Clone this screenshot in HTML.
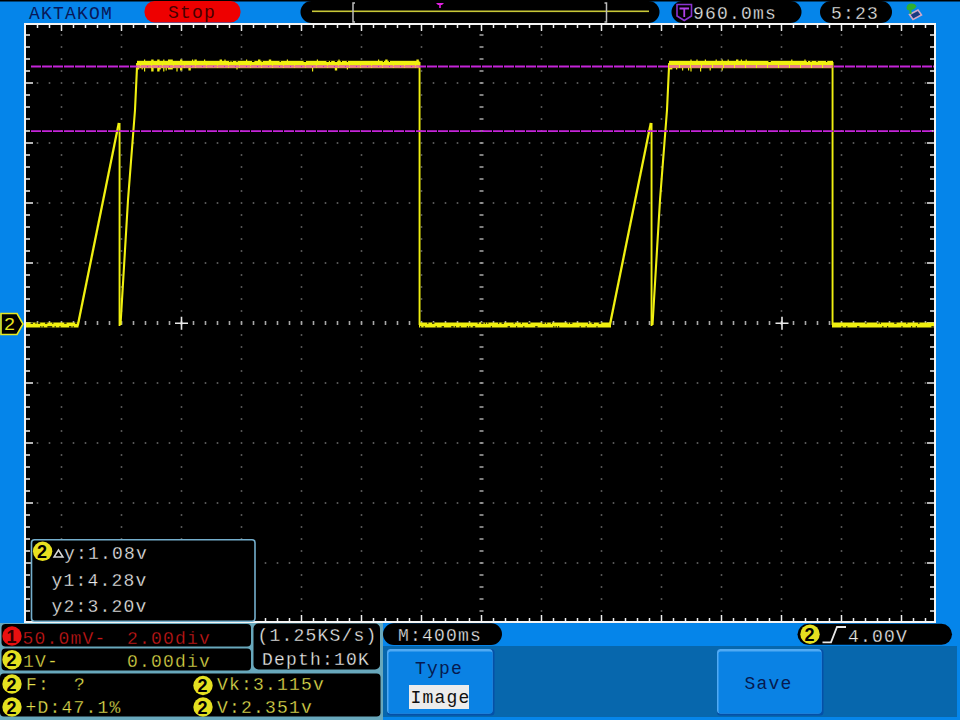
<!DOCTYPE html>
<html><head><meta charset="utf-8"><style>
html,body{margin:0;padding:0;background:#0585ea;overflow:hidden}
svg{display:block}
</style></head><body>
<svg width="960" height="720" viewBox="0 0 960 720">
<rect x="0" y="0" width="960" height="720" fill="#0585ea"/>
<rect x="0" y="0" width="960" height="1.5" fill="#000"/>
<rect x="24" y="23" width="912" height="600" fill="#000"/>
<path d="M60.7 34.2h1.6v1.6h-1.6zM60.7 46.2h1.6v1.6h-1.6zM60.7 58.2h1.6v1.6h-1.6zM60.7 70.2h1.6v1.6h-1.6zM60.7 82.2h1.6v1.6h-1.6zM60.7 94.2h1.6v1.6h-1.6zM60.7 106.2h1.6v1.6h-1.6zM60.7 118.2h1.6v1.6h-1.6zM60.7 130.2h1.6v1.6h-1.6zM60.7 142.2h1.6v1.6h-1.6zM60.7 154.2h1.6v1.6h-1.6zM60.7 166.2h1.6v1.6h-1.6zM60.7 178.2h1.6v1.6h-1.6zM60.7 190.2h1.6v1.6h-1.6zM60.7 202.2h1.6v1.6h-1.6zM60.7 214.2h1.6v1.6h-1.6zM60.7 226.2h1.6v1.6h-1.6zM60.7 238.2h1.6v1.6h-1.6zM60.7 250.2h1.6v1.6h-1.6zM60.7 262.2h1.6v1.6h-1.6zM60.7 274.2h1.6v1.6h-1.6zM60.7 286.2h1.6v1.6h-1.6zM60.7 298.2h1.6v1.6h-1.6zM60.7 310.2h1.6v1.6h-1.6zM60.7 322.2h1.6v1.6h-1.6zM60.7 334.2h1.6v1.6h-1.6zM60.7 346.2h1.6v1.6h-1.6zM60.7 358.2h1.6v1.6h-1.6zM60.7 370.2h1.6v1.6h-1.6zM60.7 382.2h1.6v1.6h-1.6zM60.7 394.2h1.6v1.6h-1.6zM60.7 406.2h1.6v1.6h-1.6zM60.7 418.2h1.6v1.6h-1.6zM60.7 430.2h1.6v1.6h-1.6zM60.7 442.2h1.6v1.6h-1.6zM60.7 454.2h1.6v1.6h-1.6zM60.7 466.2h1.6v1.6h-1.6zM60.7 478.2h1.6v1.6h-1.6zM60.7 490.2h1.6v1.6h-1.6zM60.7 502.2h1.6v1.6h-1.6zM60.7 514.2h1.6v1.6h-1.6zM60.7 526.2h1.6v1.6h-1.6zM60.7 538.2h1.6v1.6h-1.6zM60.7 550.2h1.6v1.6h-1.6zM60.7 562.2h1.6v1.6h-1.6zM60.7 574.2h1.6v1.6h-1.6zM60.7 586.2h1.6v1.6h-1.6zM60.7 598.2h1.6v1.6h-1.6zM60.7 610.2h1.6v1.6h-1.6zM120.7 34.2h1.6v1.6h-1.6zM120.7 46.2h1.6v1.6h-1.6zM120.7 58.2h1.6v1.6h-1.6zM120.7 70.2h1.6v1.6h-1.6zM120.7 82.2h1.6v1.6h-1.6zM120.7 94.2h1.6v1.6h-1.6zM120.7 106.2h1.6v1.6h-1.6zM120.7 118.2h1.6v1.6h-1.6zM120.7 130.2h1.6v1.6h-1.6zM120.7 142.2h1.6v1.6h-1.6zM120.7 154.2h1.6v1.6h-1.6zM120.7 166.2h1.6v1.6h-1.6zM120.7 178.2h1.6v1.6h-1.6zM120.7 190.2h1.6v1.6h-1.6zM120.7 202.2h1.6v1.6h-1.6zM120.7 214.2h1.6v1.6h-1.6zM120.7 226.2h1.6v1.6h-1.6zM120.7 238.2h1.6v1.6h-1.6zM120.7 250.2h1.6v1.6h-1.6zM120.7 262.2h1.6v1.6h-1.6zM120.7 274.2h1.6v1.6h-1.6zM120.7 286.2h1.6v1.6h-1.6zM120.7 298.2h1.6v1.6h-1.6zM120.7 310.2h1.6v1.6h-1.6zM120.7 322.2h1.6v1.6h-1.6zM120.7 334.2h1.6v1.6h-1.6zM120.7 346.2h1.6v1.6h-1.6zM120.7 358.2h1.6v1.6h-1.6zM120.7 370.2h1.6v1.6h-1.6zM120.7 382.2h1.6v1.6h-1.6zM120.7 394.2h1.6v1.6h-1.6zM120.7 406.2h1.6v1.6h-1.6zM120.7 418.2h1.6v1.6h-1.6zM120.7 430.2h1.6v1.6h-1.6zM120.7 442.2h1.6v1.6h-1.6zM120.7 454.2h1.6v1.6h-1.6zM120.7 466.2h1.6v1.6h-1.6zM120.7 478.2h1.6v1.6h-1.6zM120.7 490.2h1.6v1.6h-1.6zM120.7 502.2h1.6v1.6h-1.6zM120.7 514.2h1.6v1.6h-1.6zM120.7 526.2h1.6v1.6h-1.6zM120.7 538.2h1.6v1.6h-1.6zM120.7 550.2h1.6v1.6h-1.6zM120.7 562.2h1.6v1.6h-1.6zM120.7 574.2h1.6v1.6h-1.6zM120.7 586.2h1.6v1.6h-1.6zM120.7 598.2h1.6v1.6h-1.6zM120.7 610.2h1.6v1.6h-1.6zM180.7 34.2h1.6v1.6h-1.6zM180.7 46.2h1.6v1.6h-1.6zM180.7 58.2h1.6v1.6h-1.6zM180.7 70.2h1.6v1.6h-1.6zM180.7 82.2h1.6v1.6h-1.6zM180.7 94.2h1.6v1.6h-1.6zM180.7 106.2h1.6v1.6h-1.6zM180.7 118.2h1.6v1.6h-1.6zM180.7 130.2h1.6v1.6h-1.6zM180.7 142.2h1.6v1.6h-1.6zM180.7 154.2h1.6v1.6h-1.6zM180.7 166.2h1.6v1.6h-1.6zM180.7 178.2h1.6v1.6h-1.6zM180.7 190.2h1.6v1.6h-1.6zM180.7 202.2h1.6v1.6h-1.6zM180.7 214.2h1.6v1.6h-1.6zM180.7 226.2h1.6v1.6h-1.6zM180.7 238.2h1.6v1.6h-1.6zM180.7 250.2h1.6v1.6h-1.6zM180.7 262.2h1.6v1.6h-1.6zM180.7 274.2h1.6v1.6h-1.6zM180.7 286.2h1.6v1.6h-1.6zM180.7 298.2h1.6v1.6h-1.6zM180.7 310.2h1.6v1.6h-1.6zM180.7 322.2h1.6v1.6h-1.6zM180.7 334.2h1.6v1.6h-1.6zM180.7 346.2h1.6v1.6h-1.6zM180.7 358.2h1.6v1.6h-1.6zM180.7 370.2h1.6v1.6h-1.6zM180.7 382.2h1.6v1.6h-1.6zM180.7 394.2h1.6v1.6h-1.6zM180.7 406.2h1.6v1.6h-1.6zM180.7 418.2h1.6v1.6h-1.6zM180.7 430.2h1.6v1.6h-1.6zM180.7 442.2h1.6v1.6h-1.6zM180.7 454.2h1.6v1.6h-1.6zM180.7 466.2h1.6v1.6h-1.6zM180.7 478.2h1.6v1.6h-1.6zM180.7 490.2h1.6v1.6h-1.6zM180.7 502.2h1.6v1.6h-1.6zM180.7 514.2h1.6v1.6h-1.6zM180.7 526.2h1.6v1.6h-1.6zM180.7 538.2h1.6v1.6h-1.6zM180.7 550.2h1.6v1.6h-1.6zM180.7 562.2h1.6v1.6h-1.6zM180.7 574.2h1.6v1.6h-1.6zM180.7 586.2h1.6v1.6h-1.6zM180.7 598.2h1.6v1.6h-1.6zM180.7 610.2h1.6v1.6h-1.6zM240.7 34.2h1.6v1.6h-1.6zM240.7 46.2h1.6v1.6h-1.6zM240.7 58.2h1.6v1.6h-1.6zM240.7 70.2h1.6v1.6h-1.6zM240.7 82.2h1.6v1.6h-1.6zM240.7 94.2h1.6v1.6h-1.6zM240.7 106.2h1.6v1.6h-1.6zM240.7 118.2h1.6v1.6h-1.6zM240.7 130.2h1.6v1.6h-1.6zM240.7 142.2h1.6v1.6h-1.6zM240.7 154.2h1.6v1.6h-1.6zM240.7 166.2h1.6v1.6h-1.6zM240.7 178.2h1.6v1.6h-1.6zM240.7 190.2h1.6v1.6h-1.6zM240.7 202.2h1.6v1.6h-1.6zM240.7 214.2h1.6v1.6h-1.6zM240.7 226.2h1.6v1.6h-1.6zM240.7 238.2h1.6v1.6h-1.6zM240.7 250.2h1.6v1.6h-1.6zM240.7 262.2h1.6v1.6h-1.6zM240.7 274.2h1.6v1.6h-1.6zM240.7 286.2h1.6v1.6h-1.6zM240.7 298.2h1.6v1.6h-1.6zM240.7 310.2h1.6v1.6h-1.6zM240.7 322.2h1.6v1.6h-1.6zM240.7 334.2h1.6v1.6h-1.6zM240.7 346.2h1.6v1.6h-1.6zM240.7 358.2h1.6v1.6h-1.6zM240.7 370.2h1.6v1.6h-1.6zM240.7 382.2h1.6v1.6h-1.6zM240.7 394.2h1.6v1.6h-1.6zM240.7 406.2h1.6v1.6h-1.6zM240.7 418.2h1.6v1.6h-1.6zM240.7 430.2h1.6v1.6h-1.6zM240.7 442.2h1.6v1.6h-1.6zM240.7 454.2h1.6v1.6h-1.6zM240.7 466.2h1.6v1.6h-1.6zM240.7 478.2h1.6v1.6h-1.6zM240.7 490.2h1.6v1.6h-1.6zM240.7 502.2h1.6v1.6h-1.6zM240.7 514.2h1.6v1.6h-1.6zM240.7 526.2h1.6v1.6h-1.6zM240.7 538.2h1.6v1.6h-1.6zM240.7 550.2h1.6v1.6h-1.6zM240.7 562.2h1.6v1.6h-1.6zM240.7 574.2h1.6v1.6h-1.6zM240.7 586.2h1.6v1.6h-1.6zM240.7 598.2h1.6v1.6h-1.6zM240.7 610.2h1.6v1.6h-1.6zM300.7 34.2h1.6v1.6h-1.6zM300.7 46.2h1.6v1.6h-1.6zM300.7 58.2h1.6v1.6h-1.6zM300.7 70.2h1.6v1.6h-1.6zM300.7 82.2h1.6v1.6h-1.6zM300.7 94.2h1.6v1.6h-1.6zM300.7 106.2h1.6v1.6h-1.6zM300.7 118.2h1.6v1.6h-1.6zM300.7 130.2h1.6v1.6h-1.6zM300.7 142.2h1.6v1.6h-1.6zM300.7 154.2h1.6v1.6h-1.6zM300.7 166.2h1.6v1.6h-1.6zM300.7 178.2h1.6v1.6h-1.6zM300.7 190.2h1.6v1.6h-1.6zM300.7 202.2h1.6v1.6h-1.6zM300.7 214.2h1.6v1.6h-1.6zM300.7 226.2h1.6v1.6h-1.6zM300.7 238.2h1.6v1.6h-1.6zM300.7 250.2h1.6v1.6h-1.6zM300.7 262.2h1.6v1.6h-1.6zM300.7 274.2h1.6v1.6h-1.6zM300.7 286.2h1.6v1.6h-1.6zM300.7 298.2h1.6v1.6h-1.6zM300.7 310.2h1.6v1.6h-1.6zM300.7 322.2h1.6v1.6h-1.6zM300.7 334.2h1.6v1.6h-1.6zM300.7 346.2h1.6v1.6h-1.6zM300.7 358.2h1.6v1.6h-1.6zM300.7 370.2h1.6v1.6h-1.6zM300.7 382.2h1.6v1.6h-1.6zM300.7 394.2h1.6v1.6h-1.6zM300.7 406.2h1.6v1.6h-1.6zM300.7 418.2h1.6v1.6h-1.6zM300.7 430.2h1.6v1.6h-1.6zM300.7 442.2h1.6v1.6h-1.6zM300.7 454.2h1.6v1.6h-1.6zM300.7 466.2h1.6v1.6h-1.6zM300.7 478.2h1.6v1.6h-1.6zM300.7 490.2h1.6v1.6h-1.6zM300.7 502.2h1.6v1.6h-1.6zM300.7 514.2h1.6v1.6h-1.6zM300.7 526.2h1.6v1.6h-1.6zM300.7 538.2h1.6v1.6h-1.6zM300.7 550.2h1.6v1.6h-1.6zM300.7 562.2h1.6v1.6h-1.6zM300.7 574.2h1.6v1.6h-1.6zM300.7 586.2h1.6v1.6h-1.6zM300.7 598.2h1.6v1.6h-1.6zM300.7 610.2h1.6v1.6h-1.6zM360.7 34.2h1.6v1.6h-1.6zM360.7 46.2h1.6v1.6h-1.6zM360.7 58.2h1.6v1.6h-1.6zM360.7 70.2h1.6v1.6h-1.6zM360.7 82.2h1.6v1.6h-1.6zM360.7 94.2h1.6v1.6h-1.6zM360.7 106.2h1.6v1.6h-1.6zM360.7 118.2h1.6v1.6h-1.6zM360.7 130.2h1.6v1.6h-1.6zM360.7 142.2h1.6v1.6h-1.6zM360.7 154.2h1.6v1.6h-1.6zM360.7 166.2h1.6v1.6h-1.6zM360.7 178.2h1.6v1.6h-1.6zM360.7 190.2h1.6v1.6h-1.6zM360.7 202.2h1.6v1.6h-1.6zM360.7 214.2h1.6v1.6h-1.6zM360.7 226.2h1.6v1.6h-1.6zM360.7 238.2h1.6v1.6h-1.6zM360.7 250.2h1.6v1.6h-1.6zM360.7 262.2h1.6v1.6h-1.6zM360.7 274.2h1.6v1.6h-1.6zM360.7 286.2h1.6v1.6h-1.6zM360.7 298.2h1.6v1.6h-1.6zM360.7 310.2h1.6v1.6h-1.6zM360.7 322.2h1.6v1.6h-1.6zM360.7 334.2h1.6v1.6h-1.6zM360.7 346.2h1.6v1.6h-1.6zM360.7 358.2h1.6v1.6h-1.6zM360.7 370.2h1.6v1.6h-1.6zM360.7 382.2h1.6v1.6h-1.6zM360.7 394.2h1.6v1.6h-1.6zM360.7 406.2h1.6v1.6h-1.6zM360.7 418.2h1.6v1.6h-1.6zM360.7 430.2h1.6v1.6h-1.6zM360.7 442.2h1.6v1.6h-1.6zM360.7 454.2h1.6v1.6h-1.6zM360.7 466.2h1.6v1.6h-1.6zM360.7 478.2h1.6v1.6h-1.6zM360.7 490.2h1.6v1.6h-1.6zM360.7 502.2h1.6v1.6h-1.6zM360.7 514.2h1.6v1.6h-1.6zM360.7 526.2h1.6v1.6h-1.6zM360.7 538.2h1.6v1.6h-1.6zM360.7 550.2h1.6v1.6h-1.6zM360.7 562.2h1.6v1.6h-1.6zM360.7 574.2h1.6v1.6h-1.6zM360.7 586.2h1.6v1.6h-1.6zM360.7 598.2h1.6v1.6h-1.6zM360.7 610.2h1.6v1.6h-1.6zM420.7 34.2h1.6v1.6h-1.6zM420.7 46.2h1.6v1.6h-1.6zM420.7 58.2h1.6v1.6h-1.6zM420.7 70.2h1.6v1.6h-1.6zM420.7 82.2h1.6v1.6h-1.6zM420.7 94.2h1.6v1.6h-1.6zM420.7 106.2h1.6v1.6h-1.6zM420.7 118.2h1.6v1.6h-1.6zM420.7 130.2h1.6v1.6h-1.6zM420.7 142.2h1.6v1.6h-1.6zM420.7 154.2h1.6v1.6h-1.6zM420.7 166.2h1.6v1.6h-1.6zM420.7 178.2h1.6v1.6h-1.6zM420.7 190.2h1.6v1.6h-1.6zM420.7 202.2h1.6v1.6h-1.6zM420.7 214.2h1.6v1.6h-1.6zM420.7 226.2h1.6v1.6h-1.6zM420.7 238.2h1.6v1.6h-1.6zM420.7 250.2h1.6v1.6h-1.6zM420.7 262.2h1.6v1.6h-1.6zM420.7 274.2h1.6v1.6h-1.6zM420.7 286.2h1.6v1.6h-1.6zM420.7 298.2h1.6v1.6h-1.6zM420.7 310.2h1.6v1.6h-1.6zM420.7 322.2h1.6v1.6h-1.6zM420.7 334.2h1.6v1.6h-1.6zM420.7 346.2h1.6v1.6h-1.6zM420.7 358.2h1.6v1.6h-1.6zM420.7 370.2h1.6v1.6h-1.6zM420.7 382.2h1.6v1.6h-1.6zM420.7 394.2h1.6v1.6h-1.6zM420.7 406.2h1.6v1.6h-1.6zM420.7 418.2h1.6v1.6h-1.6zM420.7 430.2h1.6v1.6h-1.6zM420.7 442.2h1.6v1.6h-1.6zM420.7 454.2h1.6v1.6h-1.6zM420.7 466.2h1.6v1.6h-1.6zM420.7 478.2h1.6v1.6h-1.6zM420.7 490.2h1.6v1.6h-1.6zM420.7 502.2h1.6v1.6h-1.6zM420.7 514.2h1.6v1.6h-1.6zM420.7 526.2h1.6v1.6h-1.6zM420.7 538.2h1.6v1.6h-1.6zM420.7 550.2h1.6v1.6h-1.6zM420.7 562.2h1.6v1.6h-1.6zM420.7 574.2h1.6v1.6h-1.6zM420.7 586.2h1.6v1.6h-1.6zM420.7 598.2h1.6v1.6h-1.6zM420.7 610.2h1.6v1.6h-1.6zM540.7 34.2h1.6v1.6h-1.6zM540.7 46.2h1.6v1.6h-1.6zM540.7 58.2h1.6v1.6h-1.6zM540.7 70.2h1.6v1.6h-1.6zM540.7 82.2h1.6v1.6h-1.6zM540.7 94.2h1.6v1.6h-1.6zM540.7 106.2h1.6v1.6h-1.6zM540.7 118.2h1.6v1.6h-1.6zM540.7 130.2h1.6v1.6h-1.6zM540.7 142.2h1.6v1.6h-1.6zM540.7 154.2h1.6v1.6h-1.6zM540.7 166.2h1.6v1.6h-1.6zM540.7 178.2h1.6v1.6h-1.6zM540.7 190.2h1.6v1.6h-1.6zM540.7 202.2h1.6v1.6h-1.6zM540.7 214.2h1.6v1.6h-1.6zM540.7 226.2h1.6v1.6h-1.6zM540.7 238.2h1.6v1.6h-1.6zM540.7 250.2h1.6v1.6h-1.6zM540.7 262.2h1.6v1.6h-1.6zM540.7 274.2h1.6v1.6h-1.6zM540.7 286.2h1.6v1.6h-1.6zM540.7 298.2h1.6v1.6h-1.6zM540.7 310.2h1.6v1.6h-1.6zM540.7 322.2h1.6v1.6h-1.6zM540.7 334.2h1.6v1.6h-1.6zM540.7 346.2h1.6v1.6h-1.6zM540.7 358.2h1.6v1.6h-1.6zM540.7 370.2h1.6v1.6h-1.6zM540.7 382.2h1.6v1.6h-1.6zM540.7 394.2h1.6v1.6h-1.6zM540.7 406.2h1.6v1.6h-1.6zM540.7 418.2h1.6v1.6h-1.6zM540.7 430.2h1.6v1.6h-1.6zM540.7 442.2h1.6v1.6h-1.6zM540.7 454.2h1.6v1.6h-1.6zM540.7 466.2h1.6v1.6h-1.6zM540.7 478.2h1.6v1.6h-1.6zM540.7 490.2h1.6v1.6h-1.6zM540.7 502.2h1.6v1.6h-1.6zM540.7 514.2h1.6v1.6h-1.6zM540.7 526.2h1.6v1.6h-1.6zM540.7 538.2h1.6v1.6h-1.6zM540.7 550.2h1.6v1.6h-1.6zM540.7 562.2h1.6v1.6h-1.6zM540.7 574.2h1.6v1.6h-1.6zM540.7 586.2h1.6v1.6h-1.6zM540.7 598.2h1.6v1.6h-1.6zM540.7 610.2h1.6v1.6h-1.6zM600.7 34.2h1.6v1.6h-1.6zM600.7 46.2h1.6v1.6h-1.6zM600.7 58.2h1.6v1.6h-1.6zM600.7 70.2h1.6v1.6h-1.6zM600.7 82.2h1.6v1.6h-1.6zM600.7 94.2h1.6v1.6h-1.6zM600.7 106.2h1.6v1.6h-1.6zM600.7 118.2h1.6v1.6h-1.6zM600.7 130.2h1.6v1.6h-1.6zM600.7 142.2h1.6v1.6h-1.6zM600.7 154.2h1.6v1.6h-1.6zM600.7 166.2h1.6v1.6h-1.6zM600.7 178.2h1.6v1.6h-1.6zM600.7 190.2h1.6v1.6h-1.6zM600.7 202.2h1.6v1.6h-1.6zM600.7 214.2h1.6v1.6h-1.6zM600.7 226.2h1.6v1.6h-1.6zM600.7 238.2h1.6v1.6h-1.6zM600.7 250.2h1.6v1.6h-1.6zM600.7 262.2h1.6v1.6h-1.6zM600.7 274.2h1.6v1.6h-1.6zM600.7 286.2h1.6v1.6h-1.6zM600.7 298.2h1.6v1.6h-1.6zM600.7 310.2h1.6v1.6h-1.6zM600.7 322.2h1.6v1.6h-1.6zM600.7 334.2h1.6v1.6h-1.6zM600.7 346.2h1.6v1.6h-1.6zM600.7 358.2h1.6v1.6h-1.6zM600.7 370.2h1.6v1.6h-1.6zM600.7 382.2h1.6v1.6h-1.6zM600.7 394.2h1.6v1.6h-1.6zM600.7 406.2h1.6v1.6h-1.6zM600.7 418.2h1.6v1.6h-1.6zM600.7 430.2h1.6v1.6h-1.6zM600.7 442.2h1.6v1.6h-1.6zM600.7 454.2h1.6v1.6h-1.6zM600.7 466.2h1.6v1.6h-1.6zM600.7 478.2h1.6v1.6h-1.6zM600.7 490.2h1.6v1.6h-1.6zM600.7 502.2h1.6v1.6h-1.6zM600.7 514.2h1.6v1.6h-1.6zM600.7 526.2h1.6v1.6h-1.6zM600.7 538.2h1.6v1.6h-1.6zM600.7 550.2h1.6v1.6h-1.6zM600.7 562.2h1.6v1.6h-1.6zM600.7 574.2h1.6v1.6h-1.6zM600.7 586.2h1.6v1.6h-1.6zM600.7 598.2h1.6v1.6h-1.6zM600.7 610.2h1.6v1.6h-1.6zM660.7 34.2h1.6v1.6h-1.6zM660.7 46.2h1.6v1.6h-1.6zM660.7 58.2h1.6v1.6h-1.6zM660.7 70.2h1.6v1.6h-1.6zM660.7 82.2h1.6v1.6h-1.6zM660.7 94.2h1.6v1.6h-1.6zM660.7 106.2h1.6v1.6h-1.6zM660.7 118.2h1.6v1.6h-1.6zM660.7 130.2h1.6v1.6h-1.6zM660.7 142.2h1.6v1.6h-1.6zM660.7 154.2h1.6v1.6h-1.6zM660.7 166.2h1.6v1.6h-1.6zM660.7 178.2h1.6v1.6h-1.6zM660.7 190.2h1.6v1.6h-1.6zM660.7 202.2h1.6v1.6h-1.6zM660.7 214.2h1.6v1.6h-1.6zM660.7 226.2h1.6v1.6h-1.6zM660.7 238.2h1.6v1.6h-1.6zM660.7 250.2h1.6v1.6h-1.6zM660.7 262.2h1.6v1.6h-1.6zM660.7 274.2h1.6v1.6h-1.6zM660.7 286.2h1.6v1.6h-1.6zM660.7 298.2h1.6v1.6h-1.6zM660.7 310.2h1.6v1.6h-1.6zM660.7 322.2h1.6v1.6h-1.6zM660.7 334.2h1.6v1.6h-1.6zM660.7 346.2h1.6v1.6h-1.6zM660.7 358.2h1.6v1.6h-1.6zM660.7 370.2h1.6v1.6h-1.6zM660.7 382.2h1.6v1.6h-1.6zM660.7 394.2h1.6v1.6h-1.6zM660.7 406.2h1.6v1.6h-1.6zM660.7 418.2h1.6v1.6h-1.6zM660.7 430.2h1.6v1.6h-1.6zM660.7 442.2h1.6v1.6h-1.6zM660.7 454.2h1.6v1.6h-1.6zM660.7 466.2h1.6v1.6h-1.6zM660.7 478.2h1.6v1.6h-1.6zM660.7 490.2h1.6v1.6h-1.6zM660.7 502.2h1.6v1.6h-1.6zM660.7 514.2h1.6v1.6h-1.6zM660.7 526.2h1.6v1.6h-1.6zM660.7 538.2h1.6v1.6h-1.6zM660.7 550.2h1.6v1.6h-1.6zM660.7 562.2h1.6v1.6h-1.6zM660.7 574.2h1.6v1.6h-1.6zM660.7 586.2h1.6v1.6h-1.6zM660.7 598.2h1.6v1.6h-1.6zM660.7 610.2h1.6v1.6h-1.6zM720.7 34.2h1.6v1.6h-1.6zM720.7 46.2h1.6v1.6h-1.6zM720.7 58.2h1.6v1.6h-1.6zM720.7 70.2h1.6v1.6h-1.6zM720.7 82.2h1.6v1.6h-1.6zM720.7 94.2h1.6v1.6h-1.6zM720.7 106.2h1.6v1.6h-1.6zM720.7 118.2h1.6v1.6h-1.6zM720.7 130.2h1.6v1.6h-1.6zM720.7 142.2h1.6v1.6h-1.6zM720.7 154.2h1.6v1.6h-1.6zM720.7 166.2h1.6v1.6h-1.6zM720.7 178.2h1.6v1.6h-1.6zM720.7 190.2h1.6v1.6h-1.6zM720.7 202.2h1.6v1.6h-1.6zM720.7 214.2h1.6v1.6h-1.6zM720.7 226.2h1.6v1.6h-1.6zM720.7 238.2h1.6v1.6h-1.6zM720.7 250.2h1.6v1.6h-1.6zM720.7 262.2h1.6v1.6h-1.6zM720.7 274.2h1.6v1.6h-1.6zM720.7 286.2h1.6v1.6h-1.6zM720.7 298.2h1.6v1.6h-1.6zM720.7 310.2h1.6v1.6h-1.6zM720.7 322.2h1.6v1.6h-1.6zM720.7 334.2h1.6v1.6h-1.6zM720.7 346.2h1.6v1.6h-1.6zM720.7 358.2h1.6v1.6h-1.6zM720.7 370.2h1.6v1.6h-1.6zM720.7 382.2h1.6v1.6h-1.6zM720.7 394.2h1.6v1.6h-1.6zM720.7 406.2h1.6v1.6h-1.6zM720.7 418.2h1.6v1.6h-1.6zM720.7 430.2h1.6v1.6h-1.6zM720.7 442.2h1.6v1.6h-1.6zM720.7 454.2h1.6v1.6h-1.6zM720.7 466.2h1.6v1.6h-1.6zM720.7 478.2h1.6v1.6h-1.6zM720.7 490.2h1.6v1.6h-1.6zM720.7 502.2h1.6v1.6h-1.6zM720.7 514.2h1.6v1.6h-1.6zM720.7 526.2h1.6v1.6h-1.6zM720.7 538.2h1.6v1.6h-1.6zM720.7 550.2h1.6v1.6h-1.6zM720.7 562.2h1.6v1.6h-1.6zM720.7 574.2h1.6v1.6h-1.6zM720.7 586.2h1.6v1.6h-1.6zM720.7 598.2h1.6v1.6h-1.6zM720.7 610.2h1.6v1.6h-1.6zM780.7 34.2h1.6v1.6h-1.6zM780.7 46.2h1.6v1.6h-1.6zM780.7 58.2h1.6v1.6h-1.6zM780.7 70.2h1.6v1.6h-1.6zM780.7 82.2h1.6v1.6h-1.6zM780.7 94.2h1.6v1.6h-1.6zM780.7 106.2h1.6v1.6h-1.6zM780.7 118.2h1.6v1.6h-1.6zM780.7 130.2h1.6v1.6h-1.6zM780.7 142.2h1.6v1.6h-1.6zM780.7 154.2h1.6v1.6h-1.6zM780.7 166.2h1.6v1.6h-1.6zM780.7 178.2h1.6v1.6h-1.6zM780.7 190.2h1.6v1.6h-1.6zM780.7 202.2h1.6v1.6h-1.6zM780.7 214.2h1.6v1.6h-1.6zM780.7 226.2h1.6v1.6h-1.6zM780.7 238.2h1.6v1.6h-1.6zM780.7 250.2h1.6v1.6h-1.6zM780.7 262.2h1.6v1.6h-1.6zM780.7 274.2h1.6v1.6h-1.6zM780.7 286.2h1.6v1.6h-1.6zM780.7 298.2h1.6v1.6h-1.6zM780.7 310.2h1.6v1.6h-1.6zM780.7 322.2h1.6v1.6h-1.6zM780.7 334.2h1.6v1.6h-1.6zM780.7 346.2h1.6v1.6h-1.6zM780.7 358.2h1.6v1.6h-1.6zM780.7 370.2h1.6v1.6h-1.6zM780.7 382.2h1.6v1.6h-1.6zM780.7 394.2h1.6v1.6h-1.6zM780.7 406.2h1.6v1.6h-1.6zM780.7 418.2h1.6v1.6h-1.6zM780.7 430.2h1.6v1.6h-1.6zM780.7 442.2h1.6v1.6h-1.6zM780.7 454.2h1.6v1.6h-1.6zM780.7 466.2h1.6v1.6h-1.6zM780.7 478.2h1.6v1.6h-1.6zM780.7 490.2h1.6v1.6h-1.6zM780.7 502.2h1.6v1.6h-1.6zM780.7 514.2h1.6v1.6h-1.6zM780.7 526.2h1.6v1.6h-1.6zM780.7 538.2h1.6v1.6h-1.6zM780.7 550.2h1.6v1.6h-1.6zM780.7 562.2h1.6v1.6h-1.6zM780.7 574.2h1.6v1.6h-1.6zM780.7 586.2h1.6v1.6h-1.6zM780.7 598.2h1.6v1.6h-1.6zM780.7 610.2h1.6v1.6h-1.6zM840.7 34.2h1.6v1.6h-1.6zM840.7 46.2h1.6v1.6h-1.6zM840.7 58.2h1.6v1.6h-1.6zM840.7 70.2h1.6v1.6h-1.6zM840.7 82.2h1.6v1.6h-1.6zM840.7 94.2h1.6v1.6h-1.6zM840.7 106.2h1.6v1.6h-1.6zM840.7 118.2h1.6v1.6h-1.6zM840.7 130.2h1.6v1.6h-1.6zM840.7 142.2h1.6v1.6h-1.6zM840.7 154.2h1.6v1.6h-1.6zM840.7 166.2h1.6v1.6h-1.6zM840.7 178.2h1.6v1.6h-1.6zM840.7 190.2h1.6v1.6h-1.6zM840.7 202.2h1.6v1.6h-1.6zM840.7 214.2h1.6v1.6h-1.6zM840.7 226.2h1.6v1.6h-1.6zM840.7 238.2h1.6v1.6h-1.6zM840.7 250.2h1.6v1.6h-1.6zM840.7 262.2h1.6v1.6h-1.6zM840.7 274.2h1.6v1.6h-1.6zM840.7 286.2h1.6v1.6h-1.6zM840.7 298.2h1.6v1.6h-1.6zM840.7 310.2h1.6v1.6h-1.6zM840.7 322.2h1.6v1.6h-1.6zM840.7 334.2h1.6v1.6h-1.6zM840.7 346.2h1.6v1.6h-1.6zM840.7 358.2h1.6v1.6h-1.6zM840.7 370.2h1.6v1.6h-1.6zM840.7 382.2h1.6v1.6h-1.6zM840.7 394.2h1.6v1.6h-1.6zM840.7 406.2h1.6v1.6h-1.6zM840.7 418.2h1.6v1.6h-1.6zM840.7 430.2h1.6v1.6h-1.6zM840.7 442.2h1.6v1.6h-1.6zM840.7 454.2h1.6v1.6h-1.6zM840.7 466.2h1.6v1.6h-1.6zM840.7 478.2h1.6v1.6h-1.6zM840.7 490.2h1.6v1.6h-1.6zM840.7 502.2h1.6v1.6h-1.6zM840.7 514.2h1.6v1.6h-1.6zM840.7 526.2h1.6v1.6h-1.6zM840.7 538.2h1.6v1.6h-1.6zM840.7 550.2h1.6v1.6h-1.6zM840.7 562.2h1.6v1.6h-1.6zM840.7 574.2h1.6v1.6h-1.6zM840.7 586.2h1.6v1.6h-1.6zM840.7 598.2h1.6v1.6h-1.6zM840.7 610.2h1.6v1.6h-1.6zM900.7 34.2h1.6v1.6h-1.6zM900.7 46.2h1.6v1.6h-1.6zM900.7 58.2h1.6v1.6h-1.6zM900.7 70.2h1.6v1.6h-1.6zM900.7 82.2h1.6v1.6h-1.6zM900.7 94.2h1.6v1.6h-1.6zM900.7 106.2h1.6v1.6h-1.6zM900.7 118.2h1.6v1.6h-1.6zM900.7 130.2h1.6v1.6h-1.6zM900.7 142.2h1.6v1.6h-1.6zM900.7 154.2h1.6v1.6h-1.6zM900.7 166.2h1.6v1.6h-1.6zM900.7 178.2h1.6v1.6h-1.6zM900.7 190.2h1.6v1.6h-1.6zM900.7 202.2h1.6v1.6h-1.6zM900.7 214.2h1.6v1.6h-1.6zM900.7 226.2h1.6v1.6h-1.6zM900.7 238.2h1.6v1.6h-1.6zM900.7 250.2h1.6v1.6h-1.6zM900.7 262.2h1.6v1.6h-1.6zM900.7 274.2h1.6v1.6h-1.6zM900.7 286.2h1.6v1.6h-1.6zM900.7 298.2h1.6v1.6h-1.6zM900.7 310.2h1.6v1.6h-1.6zM900.7 322.2h1.6v1.6h-1.6zM900.7 334.2h1.6v1.6h-1.6zM900.7 346.2h1.6v1.6h-1.6zM900.7 358.2h1.6v1.6h-1.6zM900.7 370.2h1.6v1.6h-1.6zM900.7 382.2h1.6v1.6h-1.6zM900.7 394.2h1.6v1.6h-1.6zM900.7 406.2h1.6v1.6h-1.6zM900.7 418.2h1.6v1.6h-1.6zM900.7 430.2h1.6v1.6h-1.6zM900.7 442.2h1.6v1.6h-1.6zM900.7 454.2h1.6v1.6h-1.6zM900.7 466.2h1.6v1.6h-1.6zM900.7 478.2h1.6v1.6h-1.6zM900.7 490.2h1.6v1.6h-1.6zM900.7 502.2h1.6v1.6h-1.6zM900.7 514.2h1.6v1.6h-1.6zM900.7 526.2h1.6v1.6h-1.6zM900.7 538.2h1.6v1.6h-1.6zM900.7 550.2h1.6v1.6h-1.6zM900.7 562.2h1.6v1.6h-1.6zM900.7 574.2h1.6v1.6h-1.6zM900.7 586.2h1.6v1.6h-1.6zM900.7 598.2h1.6v1.6h-1.6zM900.7 610.2h1.6v1.6h-1.6zM36.7 82.2h1.6v1.6h-1.6zM48.7 82.2h1.6v1.6h-1.6zM60.7 82.2h1.6v1.6h-1.6zM72.7 82.2h1.6v1.6h-1.6zM84.7 82.2h1.6v1.6h-1.6zM96.7 82.2h1.6v1.6h-1.6zM108.7 82.2h1.6v1.6h-1.6zM120.7 82.2h1.6v1.6h-1.6zM132.7 82.2h1.6v1.6h-1.6zM144.7 82.2h1.6v1.6h-1.6zM156.7 82.2h1.6v1.6h-1.6zM168.7 82.2h1.6v1.6h-1.6zM180.7 82.2h1.6v1.6h-1.6zM192.7 82.2h1.6v1.6h-1.6zM204.7 82.2h1.6v1.6h-1.6zM216.7 82.2h1.6v1.6h-1.6zM228.7 82.2h1.6v1.6h-1.6zM240.7 82.2h1.6v1.6h-1.6zM252.7 82.2h1.6v1.6h-1.6zM264.7 82.2h1.6v1.6h-1.6zM276.7 82.2h1.6v1.6h-1.6zM288.7 82.2h1.6v1.6h-1.6zM300.7 82.2h1.6v1.6h-1.6zM312.7 82.2h1.6v1.6h-1.6zM324.7 82.2h1.6v1.6h-1.6zM336.7 82.2h1.6v1.6h-1.6zM348.7 82.2h1.6v1.6h-1.6zM360.7 82.2h1.6v1.6h-1.6zM372.7 82.2h1.6v1.6h-1.6zM384.7 82.2h1.6v1.6h-1.6zM396.7 82.2h1.6v1.6h-1.6zM408.7 82.2h1.6v1.6h-1.6zM420.7 82.2h1.6v1.6h-1.6zM432.7 82.2h1.6v1.6h-1.6zM444.7 82.2h1.6v1.6h-1.6zM456.7 82.2h1.6v1.6h-1.6zM468.7 82.2h1.6v1.6h-1.6zM480.7 82.2h1.6v1.6h-1.6zM492.7 82.2h1.6v1.6h-1.6zM504.7 82.2h1.6v1.6h-1.6zM516.7 82.2h1.6v1.6h-1.6zM528.7 82.2h1.6v1.6h-1.6zM540.7 82.2h1.6v1.6h-1.6zM552.7 82.2h1.6v1.6h-1.6zM564.7 82.2h1.6v1.6h-1.6zM576.7 82.2h1.6v1.6h-1.6zM588.7 82.2h1.6v1.6h-1.6zM600.7 82.2h1.6v1.6h-1.6zM612.7 82.2h1.6v1.6h-1.6zM624.7 82.2h1.6v1.6h-1.6zM636.7 82.2h1.6v1.6h-1.6zM648.7 82.2h1.6v1.6h-1.6zM660.7 82.2h1.6v1.6h-1.6zM672.7 82.2h1.6v1.6h-1.6zM684.7 82.2h1.6v1.6h-1.6zM696.7 82.2h1.6v1.6h-1.6zM708.7 82.2h1.6v1.6h-1.6zM720.7 82.2h1.6v1.6h-1.6zM732.7 82.2h1.6v1.6h-1.6zM744.7 82.2h1.6v1.6h-1.6zM756.7 82.2h1.6v1.6h-1.6zM768.7 82.2h1.6v1.6h-1.6zM780.7 82.2h1.6v1.6h-1.6zM792.7 82.2h1.6v1.6h-1.6zM804.7 82.2h1.6v1.6h-1.6zM816.7 82.2h1.6v1.6h-1.6zM828.7 82.2h1.6v1.6h-1.6zM840.7 82.2h1.6v1.6h-1.6zM852.7 82.2h1.6v1.6h-1.6zM864.7 82.2h1.6v1.6h-1.6zM876.7 82.2h1.6v1.6h-1.6zM888.7 82.2h1.6v1.6h-1.6zM900.7 82.2h1.6v1.6h-1.6zM912.7 82.2h1.6v1.6h-1.6zM924.7 82.2h1.6v1.6h-1.6zM36.7 142.2h1.6v1.6h-1.6zM48.7 142.2h1.6v1.6h-1.6zM60.7 142.2h1.6v1.6h-1.6zM72.7 142.2h1.6v1.6h-1.6zM84.7 142.2h1.6v1.6h-1.6zM96.7 142.2h1.6v1.6h-1.6zM108.7 142.2h1.6v1.6h-1.6zM120.7 142.2h1.6v1.6h-1.6zM132.7 142.2h1.6v1.6h-1.6zM144.7 142.2h1.6v1.6h-1.6zM156.7 142.2h1.6v1.6h-1.6zM168.7 142.2h1.6v1.6h-1.6zM180.7 142.2h1.6v1.6h-1.6zM192.7 142.2h1.6v1.6h-1.6zM204.7 142.2h1.6v1.6h-1.6zM216.7 142.2h1.6v1.6h-1.6zM228.7 142.2h1.6v1.6h-1.6zM240.7 142.2h1.6v1.6h-1.6zM252.7 142.2h1.6v1.6h-1.6zM264.7 142.2h1.6v1.6h-1.6zM276.7 142.2h1.6v1.6h-1.6zM288.7 142.2h1.6v1.6h-1.6zM300.7 142.2h1.6v1.6h-1.6zM312.7 142.2h1.6v1.6h-1.6zM324.7 142.2h1.6v1.6h-1.6zM336.7 142.2h1.6v1.6h-1.6zM348.7 142.2h1.6v1.6h-1.6zM360.7 142.2h1.6v1.6h-1.6zM372.7 142.2h1.6v1.6h-1.6zM384.7 142.2h1.6v1.6h-1.6zM396.7 142.2h1.6v1.6h-1.6zM408.7 142.2h1.6v1.6h-1.6zM420.7 142.2h1.6v1.6h-1.6zM432.7 142.2h1.6v1.6h-1.6zM444.7 142.2h1.6v1.6h-1.6zM456.7 142.2h1.6v1.6h-1.6zM468.7 142.2h1.6v1.6h-1.6zM480.7 142.2h1.6v1.6h-1.6zM492.7 142.2h1.6v1.6h-1.6zM504.7 142.2h1.6v1.6h-1.6zM516.7 142.2h1.6v1.6h-1.6zM528.7 142.2h1.6v1.6h-1.6zM540.7 142.2h1.6v1.6h-1.6zM552.7 142.2h1.6v1.6h-1.6zM564.7 142.2h1.6v1.6h-1.6zM576.7 142.2h1.6v1.6h-1.6zM588.7 142.2h1.6v1.6h-1.6zM600.7 142.2h1.6v1.6h-1.6zM612.7 142.2h1.6v1.6h-1.6zM624.7 142.2h1.6v1.6h-1.6zM636.7 142.2h1.6v1.6h-1.6zM648.7 142.2h1.6v1.6h-1.6zM660.7 142.2h1.6v1.6h-1.6zM672.7 142.2h1.6v1.6h-1.6zM684.7 142.2h1.6v1.6h-1.6zM696.7 142.2h1.6v1.6h-1.6zM708.7 142.2h1.6v1.6h-1.6zM720.7 142.2h1.6v1.6h-1.6zM732.7 142.2h1.6v1.6h-1.6zM744.7 142.2h1.6v1.6h-1.6zM756.7 142.2h1.6v1.6h-1.6zM768.7 142.2h1.6v1.6h-1.6zM780.7 142.2h1.6v1.6h-1.6zM792.7 142.2h1.6v1.6h-1.6zM804.7 142.2h1.6v1.6h-1.6zM816.7 142.2h1.6v1.6h-1.6zM828.7 142.2h1.6v1.6h-1.6zM840.7 142.2h1.6v1.6h-1.6zM852.7 142.2h1.6v1.6h-1.6zM864.7 142.2h1.6v1.6h-1.6zM876.7 142.2h1.6v1.6h-1.6zM888.7 142.2h1.6v1.6h-1.6zM900.7 142.2h1.6v1.6h-1.6zM912.7 142.2h1.6v1.6h-1.6zM924.7 142.2h1.6v1.6h-1.6zM36.7 202.2h1.6v1.6h-1.6zM48.7 202.2h1.6v1.6h-1.6zM60.7 202.2h1.6v1.6h-1.6zM72.7 202.2h1.6v1.6h-1.6zM84.7 202.2h1.6v1.6h-1.6zM96.7 202.2h1.6v1.6h-1.6zM108.7 202.2h1.6v1.6h-1.6zM120.7 202.2h1.6v1.6h-1.6zM132.7 202.2h1.6v1.6h-1.6zM144.7 202.2h1.6v1.6h-1.6zM156.7 202.2h1.6v1.6h-1.6zM168.7 202.2h1.6v1.6h-1.6zM180.7 202.2h1.6v1.6h-1.6zM192.7 202.2h1.6v1.6h-1.6zM204.7 202.2h1.6v1.6h-1.6zM216.7 202.2h1.6v1.6h-1.6zM228.7 202.2h1.6v1.6h-1.6zM240.7 202.2h1.6v1.6h-1.6zM252.7 202.2h1.6v1.6h-1.6zM264.7 202.2h1.6v1.6h-1.6zM276.7 202.2h1.6v1.6h-1.6zM288.7 202.2h1.6v1.6h-1.6zM300.7 202.2h1.6v1.6h-1.6zM312.7 202.2h1.6v1.6h-1.6zM324.7 202.2h1.6v1.6h-1.6zM336.7 202.2h1.6v1.6h-1.6zM348.7 202.2h1.6v1.6h-1.6zM360.7 202.2h1.6v1.6h-1.6zM372.7 202.2h1.6v1.6h-1.6zM384.7 202.2h1.6v1.6h-1.6zM396.7 202.2h1.6v1.6h-1.6zM408.7 202.2h1.6v1.6h-1.6zM420.7 202.2h1.6v1.6h-1.6zM432.7 202.2h1.6v1.6h-1.6zM444.7 202.2h1.6v1.6h-1.6zM456.7 202.2h1.6v1.6h-1.6zM468.7 202.2h1.6v1.6h-1.6zM480.7 202.2h1.6v1.6h-1.6zM492.7 202.2h1.6v1.6h-1.6zM504.7 202.2h1.6v1.6h-1.6zM516.7 202.2h1.6v1.6h-1.6zM528.7 202.2h1.6v1.6h-1.6zM540.7 202.2h1.6v1.6h-1.6zM552.7 202.2h1.6v1.6h-1.6zM564.7 202.2h1.6v1.6h-1.6zM576.7 202.2h1.6v1.6h-1.6zM588.7 202.2h1.6v1.6h-1.6zM600.7 202.2h1.6v1.6h-1.6zM612.7 202.2h1.6v1.6h-1.6zM624.7 202.2h1.6v1.6h-1.6zM636.7 202.2h1.6v1.6h-1.6zM648.7 202.2h1.6v1.6h-1.6zM660.7 202.2h1.6v1.6h-1.6zM672.7 202.2h1.6v1.6h-1.6zM684.7 202.2h1.6v1.6h-1.6zM696.7 202.2h1.6v1.6h-1.6zM708.7 202.2h1.6v1.6h-1.6zM720.7 202.2h1.6v1.6h-1.6zM732.7 202.2h1.6v1.6h-1.6zM744.7 202.2h1.6v1.6h-1.6zM756.7 202.2h1.6v1.6h-1.6zM768.7 202.2h1.6v1.6h-1.6zM780.7 202.2h1.6v1.6h-1.6zM792.7 202.2h1.6v1.6h-1.6zM804.7 202.2h1.6v1.6h-1.6zM816.7 202.2h1.6v1.6h-1.6zM828.7 202.2h1.6v1.6h-1.6zM840.7 202.2h1.6v1.6h-1.6zM852.7 202.2h1.6v1.6h-1.6zM864.7 202.2h1.6v1.6h-1.6zM876.7 202.2h1.6v1.6h-1.6zM888.7 202.2h1.6v1.6h-1.6zM900.7 202.2h1.6v1.6h-1.6zM912.7 202.2h1.6v1.6h-1.6zM924.7 202.2h1.6v1.6h-1.6zM36.7 262.2h1.6v1.6h-1.6zM48.7 262.2h1.6v1.6h-1.6zM60.7 262.2h1.6v1.6h-1.6zM72.7 262.2h1.6v1.6h-1.6zM84.7 262.2h1.6v1.6h-1.6zM96.7 262.2h1.6v1.6h-1.6zM108.7 262.2h1.6v1.6h-1.6zM120.7 262.2h1.6v1.6h-1.6zM132.7 262.2h1.6v1.6h-1.6zM144.7 262.2h1.6v1.6h-1.6zM156.7 262.2h1.6v1.6h-1.6zM168.7 262.2h1.6v1.6h-1.6zM180.7 262.2h1.6v1.6h-1.6zM192.7 262.2h1.6v1.6h-1.6zM204.7 262.2h1.6v1.6h-1.6zM216.7 262.2h1.6v1.6h-1.6zM228.7 262.2h1.6v1.6h-1.6zM240.7 262.2h1.6v1.6h-1.6zM252.7 262.2h1.6v1.6h-1.6zM264.7 262.2h1.6v1.6h-1.6zM276.7 262.2h1.6v1.6h-1.6zM288.7 262.2h1.6v1.6h-1.6zM300.7 262.2h1.6v1.6h-1.6zM312.7 262.2h1.6v1.6h-1.6zM324.7 262.2h1.6v1.6h-1.6zM336.7 262.2h1.6v1.6h-1.6zM348.7 262.2h1.6v1.6h-1.6zM360.7 262.2h1.6v1.6h-1.6zM372.7 262.2h1.6v1.6h-1.6zM384.7 262.2h1.6v1.6h-1.6zM396.7 262.2h1.6v1.6h-1.6zM408.7 262.2h1.6v1.6h-1.6zM420.7 262.2h1.6v1.6h-1.6zM432.7 262.2h1.6v1.6h-1.6zM444.7 262.2h1.6v1.6h-1.6zM456.7 262.2h1.6v1.6h-1.6zM468.7 262.2h1.6v1.6h-1.6zM480.7 262.2h1.6v1.6h-1.6zM492.7 262.2h1.6v1.6h-1.6zM504.7 262.2h1.6v1.6h-1.6zM516.7 262.2h1.6v1.6h-1.6zM528.7 262.2h1.6v1.6h-1.6zM540.7 262.2h1.6v1.6h-1.6zM552.7 262.2h1.6v1.6h-1.6zM564.7 262.2h1.6v1.6h-1.6zM576.7 262.2h1.6v1.6h-1.6zM588.7 262.2h1.6v1.6h-1.6zM600.7 262.2h1.6v1.6h-1.6zM612.7 262.2h1.6v1.6h-1.6zM624.7 262.2h1.6v1.6h-1.6zM636.7 262.2h1.6v1.6h-1.6zM648.7 262.2h1.6v1.6h-1.6zM660.7 262.2h1.6v1.6h-1.6zM672.7 262.2h1.6v1.6h-1.6zM684.7 262.2h1.6v1.6h-1.6zM696.7 262.2h1.6v1.6h-1.6zM708.7 262.2h1.6v1.6h-1.6zM720.7 262.2h1.6v1.6h-1.6zM732.7 262.2h1.6v1.6h-1.6zM744.7 262.2h1.6v1.6h-1.6zM756.7 262.2h1.6v1.6h-1.6zM768.7 262.2h1.6v1.6h-1.6zM780.7 262.2h1.6v1.6h-1.6zM792.7 262.2h1.6v1.6h-1.6zM804.7 262.2h1.6v1.6h-1.6zM816.7 262.2h1.6v1.6h-1.6zM828.7 262.2h1.6v1.6h-1.6zM840.7 262.2h1.6v1.6h-1.6zM852.7 262.2h1.6v1.6h-1.6zM864.7 262.2h1.6v1.6h-1.6zM876.7 262.2h1.6v1.6h-1.6zM888.7 262.2h1.6v1.6h-1.6zM900.7 262.2h1.6v1.6h-1.6zM912.7 262.2h1.6v1.6h-1.6zM924.7 262.2h1.6v1.6h-1.6zM36.7 382.2h1.6v1.6h-1.6zM48.7 382.2h1.6v1.6h-1.6zM60.7 382.2h1.6v1.6h-1.6zM72.7 382.2h1.6v1.6h-1.6zM84.7 382.2h1.6v1.6h-1.6zM96.7 382.2h1.6v1.6h-1.6zM108.7 382.2h1.6v1.6h-1.6zM120.7 382.2h1.6v1.6h-1.6zM132.7 382.2h1.6v1.6h-1.6zM144.7 382.2h1.6v1.6h-1.6zM156.7 382.2h1.6v1.6h-1.6zM168.7 382.2h1.6v1.6h-1.6zM180.7 382.2h1.6v1.6h-1.6zM192.7 382.2h1.6v1.6h-1.6zM204.7 382.2h1.6v1.6h-1.6zM216.7 382.2h1.6v1.6h-1.6zM228.7 382.2h1.6v1.6h-1.6zM240.7 382.2h1.6v1.6h-1.6zM252.7 382.2h1.6v1.6h-1.6zM264.7 382.2h1.6v1.6h-1.6zM276.7 382.2h1.6v1.6h-1.6zM288.7 382.2h1.6v1.6h-1.6zM300.7 382.2h1.6v1.6h-1.6zM312.7 382.2h1.6v1.6h-1.6zM324.7 382.2h1.6v1.6h-1.6zM336.7 382.2h1.6v1.6h-1.6zM348.7 382.2h1.6v1.6h-1.6zM360.7 382.2h1.6v1.6h-1.6zM372.7 382.2h1.6v1.6h-1.6zM384.7 382.2h1.6v1.6h-1.6zM396.7 382.2h1.6v1.6h-1.6zM408.7 382.2h1.6v1.6h-1.6zM420.7 382.2h1.6v1.6h-1.6zM432.7 382.2h1.6v1.6h-1.6zM444.7 382.2h1.6v1.6h-1.6zM456.7 382.2h1.6v1.6h-1.6zM468.7 382.2h1.6v1.6h-1.6zM480.7 382.2h1.6v1.6h-1.6zM492.7 382.2h1.6v1.6h-1.6zM504.7 382.2h1.6v1.6h-1.6zM516.7 382.2h1.6v1.6h-1.6zM528.7 382.2h1.6v1.6h-1.6zM540.7 382.2h1.6v1.6h-1.6zM552.7 382.2h1.6v1.6h-1.6zM564.7 382.2h1.6v1.6h-1.6zM576.7 382.2h1.6v1.6h-1.6zM588.7 382.2h1.6v1.6h-1.6zM600.7 382.2h1.6v1.6h-1.6zM612.7 382.2h1.6v1.6h-1.6zM624.7 382.2h1.6v1.6h-1.6zM636.7 382.2h1.6v1.6h-1.6zM648.7 382.2h1.6v1.6h-1.6zM660.7 382.2h1.6v1.6h-1.6zM672.7 382.2h1.6v1.6h-1.6zM684.7 382.2h1.6v1.6h-1.6zM696.7 382.2h1.6v1.6h-1.6zM708.7 382.2h1.6v1.6h-1.6zM720.7 382.2h1.6v1.6h-1.6zM732.7 382.2h1.6v1.6h-1.6zM744.7 382.2h1.6v1.6h-1.6zM756.7 382.2h1.6v1.6h-1.6zM768.7 382.2h1.6v1.6h-1.6zM780.7 382.2h1.6v1.6h-1.6zM792.7 382.2h1.6v1.6h-1.6zM804.7 382.2h1.6v1.6h-1.6zM816.7 382.2h1.6v1.6h-1.6zM828.7 382.2h1.6v1.6h-1.6zM840.7 382.2h1.6v1.6h-1.6zM852.7 382.2h1.6v1.6h-1.6zM864.7 382.2h1.6v1.6h-1.6zM876.7 382.2h1.6v1.6h-1.6zM888.7 382.2h1.6v1.6h-1.6zM900.7 382.2h1.6v1.6h-1.6zM912.7 382.2h1.6v1.6h-1.6zM924.7 382.2h1.6v1.6h-1.6zM36.7 442.2h1.6v1.6h-1.6zM48.7 442.2h1.6v1.6h-1.6zM60.7 442.2h1.6v1.6h-1.6zM72.7 442.2h1.6v1.6h-1.6zM84.7 442.2h1.6v1.6h-1.6zM96.7 442.2h1.6v1.6h-1.6zM108.7 442.2h1.6v1.6h-1.6zM120.7 442.2h1.6v1.6h-1.6zM132.7 442.2h1.6v1.6h-1.6zM144.7 442.2h1.6v1.6h-1.6zM156.7 442.2h1.6v1.6h-1.6zM168.7 442.2h1.6v1.6h-1.6zM180.7 442.2h1.6v1.6h-1.6zM192.7 442.2h1.6v1.6h-1.6zM204.7 442.2h1.6v1.6h-1.6zM216.7 442.2h1.6v1.6h-1.6zM228.7 442.2h1.6v1.6h-1.6zM240.7 442.2h1.6v1.6h-1.6zM252.7 442.2h1.6v1.6h-1.6zM264.7 442.2h1.6v1.6h-1.6zM276.7 442.2h1.6v1.6h-1.6zM288.7 442.2h1.6v1.6h-1.6zM300.7 442.2h1.6v1.6h-1.6zM312.7 442.2h1.6v1.6h-1.6zM324.7 442.2h1.6v1.6h-1.6zM336.7 442.2h1.6v1.6h-1.6zM348.7 442.2h1.6v1.6h-1.6zM360.7 442.2h1.6v1.6h-1.6zM372.7 442.2h1.6v1.6h-1.6zM384.7 442.2h1.6v1.6h-1.6zM396.7 442.2h1.6v1.6h-1.6zM408.7 442.2h1.6v1.6h-1.6zM420.7 442.2h1.6v1.6h-1.6zM432.7 442.2h1.6v1.6h-1.6zM444.7 442.2h1.6v1.6h-1.6zM456.7 442.2h1.6v1.6h-1.6zM468.7 442.2h1.6v1.6h-1.6zM480.7 442.2h1.6v1.6h-1.6zM492.7 442.2h1.6v1.6h-1.6zM504.7 442.2h1.6v1.6h-1.6zM516.7 442.2h1.6v1.6h-1.6zM528.7 442.2h1.6v1.6h-1.6zM540.7 442.2h1.6v1.6h-1.6zM552.7 442.2h1.6v1.6h-1.6zM564.7 442.2h1.6v1.6h-1.6zM576.7 442.2h1.6v1.6h-1.6zM588.7 442.2h1.6v1.6h-1.6zM600.7 442.2h1.6v1.6h-1.6zM612.7 442.2h1.6v1.6h-1.6zM624.7 442.2h1.6v1.6h-1.6zM636.7 442.2h1.6v1.6h-1.6zM648.7 442.2h1.6v1.6h-1.6zM660.7 442.2h1.6v1.6h-1.6zM672.7 442.2h1.6v1.6h-1.6zM684.7 442.2h1.6v1.6h-1.6zM696.7 442.2h1.6v1.6h-1.6zM708.7 442.2h1.6v1.6h-1.6zM720.7 442.2h1.6v1.6h-1.6zM732.7 442.2h1.6v1.6h-1.6zM744.7 442.2h1.6v1.6h-1.6zM756.7 442.2h1.6v1.6h-1.6zM768.7 442.2h1.6v1.6h-1.6zM780.7 442.2h1.6v1.6h-1.6zM792.7 442.2h1.6v1.6h-1.6zM804.7 442.2h1.6v1.6h-1.6zM816.7 442.2h1.6v1.6h-1.6zM828.7 442.2h1.6v1.6h-1.6zM840.7 442.2h1.6v1.6h-1.6zM852.7 442.2h1.6v1.6h-1.6zM864.7 442.2h1.6v1.6h-1.6zM876.7 442.2h1.6v1.6h-1.6zM888.7 442.2h1.6v1.6h-1.6zM900.7 442.2h1.6v1.6h-1.6zM912.7 442.2h1.6v1.6h-1.6zM924.7 442.2h1.6v1.6h-1.6zM36.7 502.2h1.6v1.6h-1.6zM48.7 502.2h1.6v1.6h-1.6zM60.7 502.2h1.6v1.6h-1.6zM72.7 502.2h1.6v1.6h-1.6zM84.7 502.2h1.6v1.6h-1.6zM96.7 502.2h1.6v1.6h-1.6zM108.7 502.2h1.6v1.6h-1.6zM120.7 502.2h1.6v1.6h-1.6zM132.7 502.2h1.6v1.6h-1.6zM144.7 502.2h1.6v1.6h-1.6zM156.7 502.2h1.6v1.6h-1.6zM168.7 502.2h1.6v1.6h-1.6zM180.7 502.2h1.6v1.6h-1.6zM192.7 502.2h1.6v1.6h-1.6zM204.7 502.2h1.6v1.6h-1.6zM216.7 502.2h1.6v1.6h-1.6zM228.7 502.2h1.6v1.6h-1.6zM240.7 502.2h1.6v1.6h-1.6zM252.7 502.2h1.6v1.6h-1.6zM264.7 502.2h1.6v1.6h-1.6zM276.7 502.2h1.6v1.6h-1.6zM288.7 502.2h1.6v1.6h-1.6zM300.7 502.2h1.6v1.6h-1.6zM312.7 502.2h1.6v1.6h-1.6zM324.7 502.2h1.6v1.6h-1.6zM336.7 502.2h1.6v1.6h-1.6zM348.7 502.2h1.6v1.6h-1.6zM360.7 502.2h1.6v1.6h-1.6zM372.7 502.2h1.6v1.6h-1.6zM384.7 502.2h1.6v1.6h-1.6zM396.7 502.2h1.6v1.6h-1.6zM408.7 502.2h1.6v1.6h-1.6zM420.7 502.2h1.6v1.6h-1.6zM432.7 502.2h1.6v1.6h-1.6zM444.7 502.2h1.6v1.6h-1.6zM456.7 502.2h1.6v1.6h-1.6zM468.7 502.2h1.6v1.6h-1.6zM480.7 502.2h1.6v1.6h-1.6zM492.7 502.2h1.6v1.6h-1.6zM504.7 502.2h1.6v1.6h-1.6zM516.7 502.2h1.6v1.6h-1.6zM528.7 502.2h1.6v1.6h-1.6zM540.7 502.2h1.6v1.6h-1.6zM552.7 502.2h1.6v1.6h-1.6zM564.7 502.2h1.6v1.6h-1.6zM576.7 502.2h1.6v1.6h-1.6zM588.7 502.2h1.6v1.6h-1.6zM600.7 502.2h1.6v1.6h-1.6zM612.7 502.2h1.6v1.6h-1.6zM624.7 502.2h1.6v1.6h-1.6zM636.7 502.2h1.6v1.6h-1.6zM648.7 502.2h1.6v1.6h-1.6zM660.7 502.2h1.6v1.6h-1.6zM672.7 502.2h1.6v1.6h-1.6zM684.7 502.2h1.6v1.6h-1.6zM696.7 502.2h1.6v1.6h-1.6zM708.7 502.2h1.6v1.6h-1.6zM720.7 502.2h1.6v1.6h-1.6zM732.7 502.2h1.6v1.6h-1.6zM744.7 502.2h1.6v1.6h-1.6zM756.7 502.2h1.6v1.6h-1.6zM768.7 502.2h1.6v1.6h-1.6zM780.7 502.2h1.6v1.6h-1.6zM792.7 502.2h1.6v1.6h-1.6zM804.7 502.2h1.6v1.6h-1.6zM816.7 502.2h1.6v1.6h-1.6zM828.7 502.2h1.6v1.6h-1.6zM840.7 502.2h1.6v1.6h-1.6zM852.7 502.2h1.6v1.6h-1.6zM864.7 502.2h1.6v1.6h-1.6zM876.7 502.2h1.6v1.6h-1.6zM888.7 502.2h1.6v1.6h-1.6zM900.7 502.2h1.6v1.6h-1.6zM912.7 502.2h1.6v1.6h-1.6zM924.7 502.2h1.6v1.6h-1.6zM36.7 562.2h1.6v1.6h-1.6zM48.7 562.2h1.6v1.6h-1.6zM60.7 562.2h1.6v1.6h-1.6zM72.7 562.2h1.6v1.6h-1.6zM84.7 562.2h1.6v1.6h-1.6zM96.7 562.2h1.6v1.6h-1.6zM108.7 562.2h1.6v1.6h-1.6zM120.7 562.2h1.6v1.6h-1.6zM132.7 562.2h1.6v1.6h-1.6zM144.7 562.2h1.6v1.6h-1.6zM156.7 562.2h1.6v1.6h-1.6zM168.7 562.2h1.6v1.6h-1.6zM180.7 562.2h1.6v1.6h-1.6zM192.7 562.2h1.6v1.6h-1.6zM204.7 562.2h1.6v1.6h-1.6zM216.7 562.2h1.6v1.6h-1.6zM228.7 562.2h1.6v1.6h-1.6zM240.7 562.2h1.6v1.6h-1.6zM252.7 562.2h1.6v1.6h-1.6zM264.7 562.2h1.6v1.6h-1.6zM276.7 562.2h1.6v1.6h-1.6zM288.7 562.2h1.6v1.6h-1.6zM300.7 562.2h1.6v1.6h-1.6zM312.7 562.2h1.6v1.6h-1.6zM324.7 562.2h1.6v1.6h-1.6zM336.7 562.2h1.6v1.6h-1.6zM348.7 562.2h1.6v1.6h-1.6zM360.7 562.2h1.6v1.6h-1.6zM372.7 562.2h1.6v1.6h-1.6zM384.7 562.2h1.6v1.6h-1.6zM396.7 562.2h1.6v1.6h-1.6zM408.7 562.2h1.6v1.6h-1.6zM420.7 562.2h1.6v1.6h-1.6zM432.7 562.2h1.6v1.6h-1.6zM444.7 562.2h1.6v1.6h-1.6zM456.7 562.2h1.6v1.6h-1.6zM468.7 562.2h1.6v1.6h-1.6zM480.7 562.2h1.6v1.6h-1.6zM492.7 562.2h1.6v1.6h-1.6zM504.7 562.2h1.6v1.6h-1.6zM516.7 562.2h1.6v1.6h-1.6zM528.7 562.2h1.6v1.6h-1.6zM540.7 562.2h1.6v1.6h-1.6zM552.7 562.2h1.6v1.6h-1.6zM564.7 562.2h1.6v1.6h-1.6zM576.7 562.2h1.6v1.6h-1.6zM588.7 562.2h1.6v1.6h-1.6zM600.7 562.2h1.6v1.6h-1.6zM612.7 562.2h1.6v1.6h-1.6zM624.7 562.2h1.6v1.6h-1.6zM636.7 562.2h1.6v1.6h-1.6zM648.7 562.2h1.6v1.6h-1.6zM660.7 562.2h1.6v1.6h-1.6zM672.7 562.2h1.6v1.6h-1.6zM684.7 562.2h1.6v1.6h-1.6zM696.7 562.2h1.6v1.6h-1.6zM708.7 562.2h1.6v1.6h-1.6zM720.7 562.2h1.6v1.6h-1.6zM732.7 562.2h1.6v1.6h-1.6zM744.7 562.2h1.6v1.6h-1.6zM756.7 562.2h1.6v1.6h-1.6zM768.7 562.2h1.6v1.6h-1.6zM780.7 562.2h1.6v1.6h-1.6zM792.7 562.2h1.6v1.6h-1.6zM804.7 562.2h1.6v1.6h-1.6zM816.7 562.2h1.6v1.6h-1.6zM828.7 562.2h1.6v1.6h-1.6zM840.7 562.2h1.6v1.6h-1.6zM852.7 562.2h1.6v1.6h-1.6zM864.7 562.2h1.6v1.6h-1.6zM876.7 562.2h1.6v1.6h-1.6zM888.7 562.2h1.6v1.6h-1.6zM900.7 562.2h1.6v1.6h-1.6zM912.7 562.2h1.6v1.6h-1.6zM924.7 562.2h1.6v1.6h-1.6z" fill="#727272"/>
<path d="M479.5 34.2h4v1.6h-4zM479.5 46.2h4v1.6h-4zM479.5 58.2h4v1.6h-4zM479.5 70.2h4v1.6h-4zM479.5 82.2h4v1.6h-4zM479.5 94.2h4v1.6h-4zM479.5 106.2h4v1.6h-4zM479.5 118.2h4v1.6h-4zM479.5 130.2h4v1.6h-4zM479.5 142.2h4v1.6h-4zM479.5 154.2h4v1.6h-4zM479.5 166.2h4v1.6h-4zM479.5 178.2h4v1.6h-4zM479.5 190.2h4v1.6h-4zM479.5 202.2h4v1.6h-4zM479.5 214.2h4v1.6h-4zM479.5 226.2h4v1.6h-4zM479.5 238.2h4v1.6h-4zM479.5 250.2h4v1.6h-4zM479.5 262.2h4v1.6h-4zM479.5 274.2h4v1.6h-4zM479.5 286.2h4v1.6h-4zM479.5 298.2h4v1.6h-4zM479.5 310.2h4v1.6h-4zM479.5 322.2h4v1.6h-4zM479.5 334.2h4v1.6h-4zM479.5 346.2h4v1.6h-4zM479.5 358.2h4v1.6h-4zM479.5 370.2h4v1.6h-4zM479.5 382.2h4v1.6h-4zM479.5 394.2h4v1.6h-4zM479.5 406.2h4v1.6h-4zM479.5 418.2h4v1.6h-4zM479.5 430.2h4v1.6h-4zM479.5 442.2h4v1.6h-4zM479.5 454.2h4v1.6h-4zM479.5 466.2h4v1.6h-4zM479.5 478.2h4v1.6h-4zM479.5 490.2h4v1.6h-4zM479.5 502.2h4v1.6h-4zM479.5 514.2h4v1.6h-4zM479.5 526.2h4v1.6h-4zM479.5 538.2h4v1.6h-4zM479.5 550.2h4v1.6h-4zM479.5 562.2h4v1.6h-4zM479.5 574.2h4v1.6h-4zM479.5 586.2h4v1.6h-4zM479.5 598.2h4v1.6h-4zM479.5 610.2h4v1.6h-4zM36.7 321h1.6v4h-1.6zM48.7 321h1.6v4h-1.6zM60.7 321h1.6v4h-1.6zM72.7 321h1.6v4h-1.6zM84.7 321h1.6v4h-1.6zM96.7 321h1.6v4h-1.6zM108.7 321h1.6v4h-1.6zM120.7 321h1.6v4h-1.6zM132.7 321h1.6v4h-1.6zM144.7 321h1.6v4h-1.6zM156.7 321h1.6v4h-1.6zM168.7 321h1.6v4h-1.6zM180.7 321h1.6v4h-1.6zM192.7 321h1.6v4h-1.6zM204.7 321h1.6v4h-1.6zM216.7 321h1.6v4h-1.6zM228.7 321h1.6v4h-1.6zM240.7 321h1.6v4h-1.6zM252.7 321h1.6v4h-1.6zM264.7 321h1.6v4h-1.6zM276.7 321h1.6v4h-1.6zM288.7 321h1.6v4h-1.6zM300.7 321h1.6v4h-1.6zM312.7 321h1.6v4h-1.6zM324.7 321h1.6v4h-1.6zM336.7 321h1.6v4h-1.6zM348.7 321h1.6v4h-1.6zM360.7 321h1.6v4h-1.6zM372.7 321h1.6v4h-1.6zM384.7 321h1.6v4h-1.6zM396.7 321h1.6v4h-1.6zM408.7 321h1.6v4h-1.6zM420.7 321h1.6v4h-1.6zM432.7 321h1.6v4h-1.6zM444.7 321h1.6v4h-1.6zM456.7 321h1.6v4h-1.6zM468.7 321h1.6v4h-1.6zM480.7 321h1.6v4h-1.6zM492.7 321h1.6v4h-1.6zM504.7 321h1.6v4h-1.6zM516.7 321h1.6v4h-1.6zM528.7 321h1.6v4h-1.6zM540.7 321h1.6v4h-1.6zM552.7 321h1.6v4h-1.6zM564.7 321h1.6v4h-1.6zM576.7 321h1.6v4h-1.6zM588.7 321h1.6v4h-1.6zM600.7 321h1.6v4h-1.6zM612.7 321h1.6v4h-1.6zM624.7 321h1.6v4h-1.6zM636.7 321h1.6v4h-1.6zM648.7 321h1.6v4h-1.6zM660.7 321h1.6v4h-1.6zM672.7 321h1.6v4h-1.6zM684.7 321h1.6v4h-1.6zM696.7 321h1.6v4h-1.6zM708.7 321h1.6v4h-1.6zM720.7 321h1.6v4h-1.6zM732.7 321h1.6v4h-1.6zM744.7 321h1.6v4h-1.6zM756.7 321h1.6v4h-1.6zM768.7 321h1.6v4h-1.6zM780.7 321h1.6v4h-1.6zM792.7 321h1.6v4h-1.6zM804.7 321h1.6v4h-1.6zM816.7 321h1.6v4h-1.6zM828.7 321h1.6v4h-1.6zM840.7 321h1.6v4h-1.6zM852.7 321h1.6v4h-1.6zM864.7 321h1.6v4h-1.6zM876.7 321h1.6v4h-1.6zM888.7 321h1.6v4h-1.6zM900.7 321h1.6v4h-1.6zM912.7 321h1.6v4h-1.6zM924.7 321h1.6v4h-1.6z" fill="#a8a8a8"/>
<path d="M175.0 322.4h13v1.6h-13zM180.7 316.7h1.6v13h-1.6z" fill="#e8e8e8"/>
<path d="M775.5 322.4h13v1.6h-13zM781.2 316.7h1.6v13h-1.6z" fill="#e8e8e8"/>
<path d="M36.75 25h1.5v3h-1.5zM36.75 618h1.5v3h-1.5zM48.75 25h1.5v3h-1.5zM48.75 618h1.5v3h-1.5zM60.75 25h1.5v6h-1.5zM60.75 615h1.5v6h-1.5zM72.75 25h1.5v3h-1.5zM72.75 618h1.5v3h-1.5zM84.75 25h1.5v3h-1.5zM84.75 618h1.5v3h-1.5zM96.75 25h1.5v3h-1.5zM96.75 618h1.5v3h-1.5zM108.75 25h1.5v3h-1.5zM108.75 618h1.5v3h-1.5zM120.75 25h1.5v6h-1.5zM120.75 615h1.5v6h-1.5zM132.75 25h1.5v3h-1.5zM132.75 618h1.5v3h-1.5zM144.75 25h1.5v3h-1.5zM144.75 618h1.5v3h-1.5zM156.75 25h1.5v3h-1.5zM156.75 618h1.5v3h-1.5zM168.75 25h1.5v3h-1.5zM168.75 618h1.5v3h-1.5zM180.75 25h1.5v6h-1.5zM180.75 615h1.5v6h-1.5zM192.75 25h1.5v3h-1.5zM192.75 618h1.5v3h-1.5zM204.75 25h1.5v3h-1.5zM204.75 618h1.5v3h-1.5zM216.75 25h1.5v3h-1.5zM216.75 618h1.5v3h-1.5zM228.75 25h1.5v3h-1.5zM228.75 618h1.5v3h-1.5zM240.75 25h1.5v6h-1.5zM240.75 615h1.5v6h-1.5zM252.75 25h1.5v3h-1.5zM252.75 618h1.5v3h-1.5zM264.75 25h1.5v3h-1.5zM264.75 618h1.5v3h-1.5zM276.75 25h1.5v3h-1.5zM276.75 618h1.5v3h-1.5zM288.75 25h1.5v3h-1.5zM288.75 618h1.5v3h-1.5zM300.75 25h1.5v6h-1.5zM300.75 615h1.5v6h-1.5zM312.75 25h1.5v3h-1.5zM312.75 618h1.5v3h-1.5zM324.75 25h1.5v3h-1.5zM324.75 618h1.5v3h-1.5zM336.75 25h1.5v3h-1.5zM336.75 618h1.5v3h-1.5zM348.75 25h1.5v3h-1.5zM348.75 618h1.5v3h-1.5zM360.75 25h1.5v6h-1.5zM360.75 615h1.5v6h-1.5zM372.75 25h1.5v3h-1.5zM372.75 618h1.5v3h-1.5zM384.75 25h1.5v3h-1.5zM384.75 618h1.5v3h-1.5zM396.75 25h1.5v3h-1.5zM396.75 618h1.5v3h-1.5zM408.75 25h1.5v3h-1.5zM408.75 618h1.5v3h-1.5zM420.75 25h1.5v6h-1.5zM420.75 615h1.5v6h-1.5zM432.75 25h1.5v3h-1.5zM432.75 618h1.5v3h-1.5zM444.75 25h1.5v3h-1.5zM444.75 618h1.5v3h-1.5zM456.75 25h1.5v3h-1.5zM456.75 618h1.5v3h-1.5zM468.75 25h1.5v3h-1.5zM468.75 618h1.5v3h-1.5zM480.75 25h1.5v6h-1.5zM480.75 615h1.5v6h-1.5zM492.75 25h1.5v3h-1.5zM492.75 618h1.5v3h-1.5zM504.75 25h1.5v3h-1.5zM504.75 618h1.5v3h-1.5zM516.75 25h1.5v3h-1.5zM516.75 618h1.5v3h-1.5zM528.75 25h1.5v3h-1.5zM528.75 618h1.5v3h-1.5zM540.75 25h1.5v6h-1.5zM540.75 615h1.5v6h-1.5zM552.75 25h1.5v3h-1.5zM552.75 618h1.5v3h-1.5zM564.75 25h1.5v3h-1.5zM564.75 618h1.5v3h-1.5zM576.75 25h1.5v3h-1.5zM576.75 618h1.5v3h-1.5zM588.75 25h1.5v3h-1.5zM588.75 618h1.5v3h-1.5zM600.75 25h1.5v6h-1.5zM600.75 615h1.5v6h-1.5zM612.75 25h1.5v3h-1.5zM612.75 618h1.5v3h-1.5zM624.75 25h1.5v3h-1.5zM624.75 618h1.5v3h-1.5zM636.75 25h1.5v3h-1.5zM636.75 618h1.5v3h-1.5zM648.75 25h1.5v3h-1.5zM648.75 618h1.5v3h-1.5zM660.75 25h1.5v6h-1.5zM660.75 615h1.5v6h-1.5zM672.75 25h1.5v3h-1.5zM672.75 618h1.5v3h-1.5zM684.75 25h1.5v3h-1.5zM684.75 618h1.5v3h-1.5zM696.75 25h1.5v3h-1.5zM696.75 618h1.5v3h-1.5zM708.75 25h1.5v3h-1.5zM708.75 618h1.5v3h-1.5zM720.75 25h1.5v6h-1.5zM720.75 615h1.5v6h-1.5zM732.75 25h1.5v3h-1.5zM732.75 618h1.5v3h-1.5zM744.75 25h1.5v3h-1.5zM744.75 618h1.5v3h-1.5zM756.75 25h1.5v3h-1.5zM756.75 618h1.5v3h-1.5zM768.75 25h1.5v3h-1.5zM768.75 618h1.5v3h-1.5zM780.75 25h1.5v6h-1.5zM780.75 615h1.5v6h-1.5zM792.75 25h1.5v3h-1.5zM792.75 618h1.5v3h-1.5zM804.75 25h1.5v3h-1.5zM804.75 618h1.5v3h-1.5zM816.75 25h1.5v3h-1.5zM816.75 618h1.5v3h-1.5zM828.75 25h1.5v3h-1.5zM828.75 618h1.5v3h-1.5zM840.75 25h1.5v6h-1.5zM840.75 615h1.5v6h-1.5zM852.75 25h1.5v3h-1.5zM852.75 618h1.5v3h-1.5zM864.75 25h1.5v3h-1.5zM864.75 618h1.5v3h-1.5zM876.75 25h1.5v3h-1.5zM876.75 618h1.5v3h-1.5zM888.75 25h1.5v3h-1.5zM888.75 618h1.5v3h-1.5zM900.75 25h1.5v6h-1.5zM900.75 615h1.5v6h-1.5zM912.75 25h1.5v3h-1.5zM912.75 618h1.5v3h-1.5zM924.75 25h1.5v3h-1.5zM924.75 618h1.5v3h-1.5zM26 34.25h4v1.5h-4zM930 34.25h4v1.5h-4zM26 46.25h4v1.5h-4zM930 46.25h4v1.5h-4zM26 58.25h4v1.5h-4zM930 58.25h4v1.5h-4zM26 70.25h4v1.5h-4zM930 70.25h4v1.5h-4zM26 82.25h7v1.5h-7zM927 82.25h7v1.5h-7zM26 94.25h4v1.5h-4zM930 94.25h4v1.5h-4zM26 106.25h4v1.5h-4zM930 106.25h4v1.5h-4zM26 118.25h4v1.5h-4zM930 118.25h4v1.5h-4zM26 130.25h4v1.5h-4zM930 130.25h4v1.5h-4zM26 142.25h7v1.5h-7zM927 142.25h7v1.5h-7zM26 154.25h4v1.5h-4zM930 154.25h4v1.5h-4zM26 166.25h4v1.5h-4zM930 166.25h4v1.5h-4zM26 178.25h4v1.5h-4zM930 178.25h4v1.5h-4zM26 190.25h4v1.5h-4zM930 190.25h4v1.5h-4zM26 202.25h7v1.5h-7zM927 202.25h7v1.5h-7zM26 214.25h4v1.5h-4zM930 214.25h4v1.5h-4zM26 226.25h4v1.5h-4zM930 226.25h4v1.5h-4zM26 238.25h4v1.5h-4zM930 238.25h4v1.5h-4zM26 250.25h4v1.5h-4zM930 250.25h4v1.5h-4zM26 262.25h7v1.5h-7zM927 262.25h7v1.5h-7zM26 274.25h4v1.5h-4zM930 274.25h4v1.5h-4zM26 286.25h4v1.5h-4zM930 286.25h4v1.5h-4zM26 298.25h4v1.5h-4zM930 298.25h4v1.5h-4zM26 310.25h4v1.5h-4zM930 310.25h4v1.5h-4zM26 322.25h7v1.5h-7zM927 322.25h7v1.5h-7zM26 334.25h4v1.5h-4zM930 334.25h4v1.5h-4zM26 346.25h4v1.5h-4zM930 346.25h4v1.5h-4zM26 358.25h4v1.5h-4zM930 358.25h4v1.5h-4zM26 370.25h4v1.5h-4zM930 370.25h4v1.5h-4zM26 382.25h7v1.5h-7zM927 382.25h7v1.5h-7zM26 394.25h4v1.5h-4zM930 394.25h4v1.5h-4zM26 406.25h4v1.5h-4zM930 406.25h4v1.5h-4zM26 418.25h4v1.5h-4zM930 418.25h4v1.5h-4zM26 430.25h4v1.5h-4zM930 430.25h4v1.5h-4zM26 442.25h7v1.5h-7zM927 442.25h7v1.5h-7zM26 454.25h4v1.5h-4zM930 454.25h4v1.5h-4zM26 466.25h4v1.5h-4zM930 466.25h4v1.5h-4zM26 478.25h4v1.5h-4zM930 478.25h4v1.5h-4zM26 490.25h4v1.5h-4zM930 490.25h4v1.5h-4zM26 502.25h7v1.5h-7zM927 502.25h7v1.5h-7zM26 514.25h4v1.5h-4zM930 514.25h4v1.5h-4zM26 526.25h4v1.5h-4zM930 526.25h4v1.5h-4zM26 538.25h4v1.5h-4zM930 538.25h4v1.5h-4zM26 550.25h4v1.5h-4zM930 550.25h4v1.5h-4zM26 562.25h7v1.5h-7zM927 562.25h7v1.5h-7zM26 574.25h4v1.5h-4zM930 574.25h4v1.5h-4zM26 586.25h4v1.5h-4zM930 586.25h4v1.5h-4zM26 598.25h4v1.5h-4zM930 598.25h4v1.5h-4zM26 610.25h4v1.5h-4zM930 610.25h4v1.5h-4z" fill="#f0f0f0"/>
<rect x="25" y="24" width="910" height="598" fill="none" stroke="#f4f4f4" stroke-width="2"/>
<rect x="26" y="322.5" width="52.5" height="5" fill="#f0f010"/><path d="M30.6 322.4h2.4v1.3h-2.4zM35.4 322.4h1.2v1.3h-1.2zM37.8 322.4h2.4v1.3h-2.4zM40.2 326.3h1.2v1.3h-1.2zM42.6 326.3h1.2v1.3h-1.2zM45.0 322.4h2.4v1.3h-2.4zM47.4 326.3h2.4v1.3h-2.4zM49.8 326.3h2.4v1.3h-2.4zM52.2 322.4h1.2v1.3h-1.2zM54.6 326.3h1.2v1.3h-1.2zM59.4 326.3h1.2v1.3h-1.2zM64.2 322.4h2.4v1.3h-2.4zM69.0 326.3h2.4v1.3h-2.4zM72.6 326.3h1.2v1.3h-1.2zM75.0 322.4h2.4v1.3h-2.4z" fill="#000"/>
<rect x="419" y="322.5" width="192" height="5" fill="#f0f010"/><path d="M420.0 326.3h1.2v1.3h-1.2zM423.6 326.3h1.2v1.3h-1.2zM427.2 322.4h1.2v1.3h-1.2zM432.0 322.4h2.4v1.3h-2.4zM435.6 326.3h1.2v1.3h-1.2zM441.6 326.3h2.4v1.3h-2.4zM451.2 326.3h2.4v1.3h-2.4zM454.8 326.3h1.2v1.3h-1.2zM459.6 326.3h1.2v1.3h-1.2zM466.8 326.3h1.2v1.3h-1.2zM469.2 326.3h1.2v1.3h-1.2zM472.8 326.3h2.4v1.3h-2.4zM477.6 322.4h1.2v1.3h-1.2zM481.2 322.4h2.4v1.3h-2.4zM484.8 322.4h1.2v1.3h-1.2zM487.2 322.4h1.2v1.3h-1.2zM490.8 326.3h1.2v1.3h-1.2zM498.0 322.4h1.2v1.3h-1.2zM501.6 322.4h2.4v1.3h-2.4zM507.6 326.3h2.4v1.3h-2.4zM513.6 322.4h1.2v1.3h-1.2zM516.0 326.3h1.2v1.3h-1.2zM520.8 322.4h1.2v1.3h-1.2zM523.2 326.3h1.2v1.3h-1.2zM528.0 322.4h2.4v1.3h-2.4zM535.2 326.3h2.4v1.3h-2.4zM542.4 322.4h2.4v1.3h-2.4zM546.0 322.4h1.2v1.3h-1.2zM550.8 322.4h1.2v1.3h-1.2zM553.2 326.3h1.2v1.3h-1.2zM555.6 326.3h1.2v1.3h-1.2zM558.0 326.3h1.2v1.3h-1.2zM567.6 322.4h1.2v1.3h-1.2zM570.0 322.4h2.4v1.3h-2.4zM579.6 326.3h1.2v1.3h-1.2zM585.6 326.3h1.2v1.3h-1.2zM588.0 322.4h1.2v1.3h-1.2zM591.6 322.4h2.4v1.3h-2.4zM596.4 326.3h1.2v1.3h-1.2zM598.8 322.4h2.4v1.3h-2.4z" fill="#000"/>
<rect x="832" y="322.5" width="102" height="5" fill="#f0f010"/><path d="M841.4 326.3h1.2v1.3h-1.2zM846.2 326.3h1.2v1.3h-1.2zM857.0 326.3h2.4v1.3h-2.4zM865.4 322.4h1.2v1.3h-1.2zM877.4 322.4h1.2v1.3h-1.2zM879.8 322.4h1.2v1.3h-1.2zM882.2 326.3h1.2v1.3h-1.2zM887.0 326.3h1.2v1.3h-1.2zM894.2 322.4h2.4v1.3h-2.4zM901.4 326.3h1.2v1.3h-1.2zM906.2 322.4h1.2v1.3h-1.2zM911.0 326.3h1.2v1.3h-1.2zM915.8 326.3h1.2v1.3h-1.2zM918.2 322.4h1.2v1.3h-1.2zM931.4 326.3h2.4v1.3h-2.4z" fill="#000"/>
<rect x="137" y="60.8" width="282.5" height="7.4" fill="#f0f010"/><path d="M229.2 60.7h1.2v1.4h-1.2zM231.6 60.7h1.2v1.4h-1.2zM236.4 60.7h1.2v1.4h-1.2zM252.0 60.7h2.4v1.4h-2.4zM261.6 60.7h1.2v1.4h-1.2zM279.6 60.7h1.2v1.4h-1.2zM303.6 60.7h2.4v1.4h-2.4zM326.4 60.7h2.4v1.4h-2.4zM330.0 60.7h1.2v1.4h-1.2zM334.8 60.7h2.4v1.4h-2.4zM340.8 60.7h1.2v1.4h-1.2zM346.8 60.7h1.2v1.4h-1.2zM382.8 60.7h1.2v1.4h-1.2zM388.8 60.7h1.2v1.4h-1.2z" fill="#000"/><path d="M138.0 68h1.2v1.5h-1.2zM141.6 68h1.2v1.5h-1.2zM144.0 59.6h1.2v1.3h-1.2zM144.0 68h1.2v3.5h-1.2zM151.2 59.6h2.4v1.3h-2.4zM151.2 68h2.4v3.5h-2.4zM157.2 59.6h2.4v1.3h-2.4zM157.2 68h2.4v3.5h-2.4zM159.6 68h1.2v1.5h-1.2zM163.2 59.6h1.2v1.3h-1.2zM163.2 68h1.2v3.5h-1.2zM165.6 68h1.2v2.5h-1.2zM168.0 59.6h2.4v1.3h-2.4zM168.0 68h2.4v1.5h-2.4zM170.4 59.6h2.4v1.3h-2.4zM170.4 68h2.4v1.5h-2.4zM176.4 68h1.2v3.5h-1.2zM180.0 59.6h2.4v1.3h-2.4zM180.0 68h2.4v2.5h-2.4zM188.4 68h2.4v2.5h-2.4zM192.0 59.6h1.2v1.3h-1.2zM194.4 59.6h2.4v1.3h-2.4zM204.0 59.6h1.2v1.3h-1.2zM219.6 59.6h2.4v1.3h-2.4zM224.4 59.6h1.2v1.3h-1.2zM236.4 68h1.2v1.5h-1.2zM246.0 59.6h1.2v1.3h-1.2zM258.0 59.6h2.4v1.3h-2.4zM268.8 59.6h2.4v1.3h-2.4zM286.8 59.6h1.2v1.3h-1.2zM312.0 68h1.2v3.5h-1.2zM316.8 59.6h1.2v1.3h-1.2zM334.8 68h2.4v2.5h-2.4zM338.4 59.6h1.2v1.3h-1.2zM346.8 68h1.2v1.5h-1.2zM378.0 59.6h1.2v1.3h-1.2zM385.2 59.6h2.4v1.3h-2.4zM416.4 59.6h2.4v1.3h-2.4z" fill="#f0f010"/>
<rect x="669" y="60.8" width="164" height="7.4" fill="#f0f010"/><path d="M768.4 60.7h2.4v1.4h-2.4zM806.8 60.7h1.2v1.4h-1.2zM810.4 60.7h1.2v1.4h-1.2zM816.4 60.7h1.2v1.4h-1.2zM826.0 60.7h1.2v1.4h-1.2z" fill="#000"/><path d="M670.0 68h2.4v1.5h-2.4zM676.0 68h1.2v1.5h-1.2zM682.0 68h1.2v2.5h-1.2zM688.0 68h1.2v2.5h-1.2zM690.4 59.6h1.2v1.3h-1.2zM690.4 68h1.2v3.5h-1.2zM696.4 59.6h1.2v1.3h-1.2zM700.0 68h1.2v3.5h-1.2zM704.8 59.6h1.2v1.3h-1.2zM709.6 68h1.2v2.5h-1.2zM715.6 59.6h1.2v1.3h-1.2zM721.6 59.6h1.2v1.3h-1.2zM721.6 68h1.2v2.5h-1.2zM727.6 59.6h1.2v1.3h-1.2zM736.0 59.6h2.4v1.3h-2.4zM740.8 59.6h1.2v1.3h-1.2zM745.6 59.6h1.2v1.3h-1.2zM791.2 59.6h1.2v1.3h-1.2zM804.4 59.6h1.2v1.3h-1.2z" fill="#f0f010"/>
<polyline points="78,324.5 118.6,124" fill="none" stroke="#f0f010" stroke-width="2.3" stroke-linecap="square"/>
<rect x="118.6" y="123" width="1.9" height="203" fill="#f0f010"/>
<polyline points="120.5,325 128,200 135,110 137.2,63" fill="none" stroke="#f0f010" stroke-width="2.1" stroke-linejoin="round"/>
<polyline points="610,324.5 650.6,124" fill="none" stroke="#f0f010" stroke-width="2.3" stroke-linecap="square"/>
<rect x="650.6" y="123" width="1.9" height="203" fill="#f0f010"/>
<polyline points="652.5,325 660,200 667,110 669.2,63" fill="none" stroke="#f0f010" stroke-width="2.1" stroke-linejoin="round"/>
<rect x="418.6" y="62" width="1.9" height="263" fill="#f0f010"/>
<rect x="831.6" y="62" width="1.9" height="263" fill="#f0f010"/>
<line x1="31" y1="66.5" x2="934" y2="66.5" stroke="#c424d8" stroke-width="1.8" stroke-dasharray="10 1"/>
<line x1="31" y1="131.2" x2="934" y2="131.2" stroke="#c424d8" stroke-width="1.8" stroke-dasharray="10 1"/>
<line x1="137" y1="66.6" x2="419.5" y2="66.6" stroke="#f07a90" stroke-width="1.5" stroke-dasharray="10 1"/>
<line x1="669" y1="66.6" x2="833" y2="66.6" stroke="#f07a90" stroke-width="1.5" stroke-dasharray="10 1"/>
<path d="M1 313.5h16l6 10.5l-6 10.5h-16z" fill="#000" stroke="#e8e820" stroke-width="1.6"/>
<text x="0" y="0" transform="translate(4.2 330.3) scale(1.12 1)" font-family="Liberation Sans" font-size="17" fill="#e8e820">2</text>
<text x="29" y="19" font-family="Liberation Mono" font-size="18" letter-spacing="1.2" fill="#081858" style="white-space:pre" >AKTAKOM</text>
<rect x="144.5" y="1" width="96" height="21.5" rx="10" fill="#ee0000"/>
<text x="168" y="17.6" font-family="Liberation Mono" font-size="18" letter-spacing="1.2" fill="#480000" style="white-space:pre" >Stop</text>
<rect x="300.5" y="1" width="359" height="22" rx="11" fill="#000"/>
<rect x="312" y="10.5" width="337" height="1.6" fill="#c8c838"/>
<path d="M355 3h-2v19h2" fill="none" stroke="#bdbdbd" stroke-width="1.5"/>
<path d="M604.5 3h2v19h-2" fill="none" stroke="#bdbdbd" stroke-width="1.5"/>
<path d="M436 3h8l-2 2h-1.2v3h-1.6v-3h-1.2z" fill="#e020e0"/>
<rect x="671.5" y="1" width="130" height="22" rx="11" fill="#000"/>
<path d="M677 4.5h14.5v11.5l-7.25 4.5l-7.25-4.5z" fill="#000" stroke="#8a34d0" stroke-width="1.6"/>
<path d="M679.5 7.6h9.5v1.8h-3.85v7.5h-1.8v-7.5h-3.85z" fill="#b040e8"/>
<text x="693" y="19" font-family="Liberation Mono" font-size="18" letter-spacing="1.2" fill="#ececec" stroke="#000" stroke-width="0.3" style="white-space:pre" >960.0ms</text>
<rect x="820" y="1" width="72" height="22" rx="11" fill="#000"/>
<text x="831" y="19" font-family="Liberation Mono" font-size="18" letter-spacing="1.2" fill="#ececec" stroke="#000" stroke-width="0.3" style="white-space:pre" >5:23</text>
<path d="M909.5 14.5L918 10L921.5 15L913 19.5z" fill="#1a3a80" stroke="#d0a8c8" stroke-width="1.6"/>
<path d="M906.5 8.5q0-5 5-5q4 0 5 3q-2 3-5 3.5v4h-2v-3.5q-3-0.5-3-2z" fill="#30b030"/>
<rect x="31.5" y="539.8" width="223.5" height="81.5" rx="3" fill="#000" stroke="#74aecc" stroke-width="1.6"/>
<circle cx="42.6" cy="551.3" r="9.7" fill="#e8e020"/><text x="37.1" y="557.8" font-family="Liberation Sans" font-size="18" font-weight="bold" fill="#000">2</text>
<path d="M54 557h9l-4.5-7z" fill="none" stroke="#d8d8d8" stroke-width="1.5"/>
<text x="64" y="559" font-family="Liberation Mono" font-size="18" letter-spacing="1.2" fill="#ececec" stroke="#000" stroke-width="0.3" style="white-space:pre" >y:1.08v</text>
<text x="51.5" y="585.5" font-family="Liberation Mono" font-size="18" letter-spacing="1.2" fill="#ececec" stroke="#000" stroke-width="0.3" style="white-space:pre" >y1:4.28v</text>
<text x="51.5" y="612" font-family="Liberation Mono" font-size="18" letter-spacing="1.2" fill="#ececec" stroke="#000" stroke-width="0.3" style="white-space:pre" >y2:3.20v</text>
<rect x="0" y="623" width="383" height="97" fill="#68a8bc"/>
<rect x="1.5" y="624" width="249.5" height="22.5" rx="4" fill="#000"/>
<rect x="1.5" y="648.5" width="249.5" height="22" rx="4" fill="#000"/>
<rect x="253.5" y="623.5" width="126.5" height="46" rx="5" fill="#000"/>
<rect x="0" y="673.5" width="380.5" height="43" rx="4" fill="#000"/>
<circle cx="12" cy="636" r="9.7" fill="#e81010"/><text x="6.5" y="642.5" font-family="Liberation Sans" font-size="18" font-weight="bold" fill="#300000">1</text>
<text x="22.5" y="643.5" font-family="Liberation Mono" font-size="18" letter-spacing="1.2" fill="#c81818" stroke="#000" stroke-width="0.3" style="white-space:pre" >50.0mV-</text>
<text x="127" y="643.5" font-family="Liberation Mono" font-size="18" letter-spacing="1.2" fill="#c81818" stroke="#000" stroke-width="0.3" style="white-space:pre" >2.00div</text>
<circle cx="12" cy="659.7" r="9.7" fill="#e4e020"/><text x="6.5" y="666.2" font-family="Liberation Sans" font-size="18" font-weight="bold" fill="#000">2</text>
<text x="23" y="667.3" font-family="Liberation Mono" font-size="18" letter-spacing="1.2" fill="#dcd848" stroke="#000" stroke-width="0.3" style="white-space:pre" >1V-</text>
<text x="127" y="667.3" font-family="Liberation Mono" font-size="18" letter-spacing="1.2" fill="#dcd848" stroke="#000" stroke-width="0.3" style="white-space:pre" >0.00div</text>
<text x="257.5" y="641.3" font-family="Liberation Mono" font-size="18" letter-spacing="1.2" fill="#ececec" stroke="#000" stroke-width="0.3" style="white-space:pre" >(1.25KS/s)</text>
<text x="262" y="665" font-family="Liberation Mono" font-size="18" letter-spacing="1.2" fill="#ececec" stroke="#000" stroke-width="0.3" style="white-space:pre" >Depth:10K</text>
<circle cx="12" cy="684" r="9.7" fill="#e4e020"/><text x="6.5" y="690.5" font-family="Liberation Sans" font-size="18" font-weight="bold" fill="#000">2</text>
<text x="26" y="690.2" font-family="Liberation Mono" font-size="18" letter-spacing="1.2" fill="#e4e050" stroke="#000" stroke-width="0.3" style="white-space:pre" >F:  ?</text>
<circle cx="12" cy="707" r="9.7" fill="#e4e020"/><text x="6.5" y="713.5" font-family="Liberation Sans" font-size="18" font-weight="bold" fill="#000">2</text>
<text x="25.5" y="713" font-family="Liberation Mono" font-size="18" letter-spacing="1.2" fill="#e4e050" stroke="#000" stroke-width="0.3" style="white-space:pre" >+D:47.1%</text>
<circle cx="203" cy="685.5" r="9.7" fill="#e4e020"/><text x="197.5" y="692.0" font-family="Liberation Sans" font-size="18" font-weight="bold" fill="#000">2</text>
<text x="217" y="690.2" font-family="Liberation Mono" font-size="18" letter-spacing="1.2" fill="#e4e050" stroke="#000" stroke-width="0.3" style="white-space:pre" >Vk:3.115v</text>
<circle cx="203" cy="707" r="9.7" fill="#e4e020"/><text x="197.5" y="713.5" font-family="Liberation Sans" font-size="18" font-weight="bold" fill="#000">2</text>
<text x="217" y="712.5" font-family="Liberation Mono" font-size="18" letter-spacing="1.2" fill="#e4e050" stroke="#000" stroke-width="0.3" style="white-space:pre" >V:2.351v</text>
<rect x="383" y="646" width="574" height="71" fill="#0767ad"/>
<rect x="383" y="623.2" width="119" height="21.8" rx="10.9" fill="#000"/>
<text x="398" y="641" font-family="Liberation Mono" font-size="18" letter-spacing="1.2" fill="#ececec" stroke="#000" stroke-width="0.3" style="white-space:pre" >M:400ms</text>
<rect x="797.5" y="623.8" width="154.5" height="21" rx="10.5" fill="#000"/>
<circle cx="810" cy="634.2" r="9.7" fill="#e4e020"/><text x="804.5" y="640.7" font-family="Liberation Sans" font-size="18" font-weight="bold" fill="#000">2</text>
<path d="M822.5 642.3H831L837 627H846" fill="none" stroke="#e8e8e8" stroke-width="1.8"/>
<text x="848" y="641.8" font-family="Liberation Mono" font-size="18" letter-spacing="1.2" fill="#ececec" stroke="#000" stroke-width="0.3" style="white-space:pre" >4.00V</text>
<rect x="387" y="649" width="107.5" height="66.5" rx="3.5" fill="#0450a8"/><rect x="387" y="649" width="105.5" height="64.5" rx="3.5" fill="#50aaf4"/><rect x="388.5" y="651.5" width="104.0" height="62.0" rx="2" fill="#0a82e4"/>
<rect x="717" y="649" width="106.5" height="66.5" rx="3.5" fill="#0450a8"/><rect x="717" y="649" width="104.5" height="64.5" rx="3.5" fill="#50aaf4"/><rect x="718.5" y="651.5" width="103.0" height="62.0" rx="2" fill="#0a82e4"/>
<text x="415" y="673.8" font-family="Liberation Mono" font-size="18" letter-spacing="1.2" fill="#061a50" style="white-space:pre" >Type</text>
<rect x="409" y="685" width="60" height="24" fill="#ececec"/>
<text x="410.5" y="703" font-family="Liberation Mono" font-size="18" letter-spacing="1.2" fill="#101010" style="white-space:pre" >Image</text>
<text x="744.5" y="688.6" font-family="Liberation Mono" font-size="18" letter-spacing="1.2" fill="#061a50" style="white-space:pre" >Save</text>
</svg>
</body></html>
